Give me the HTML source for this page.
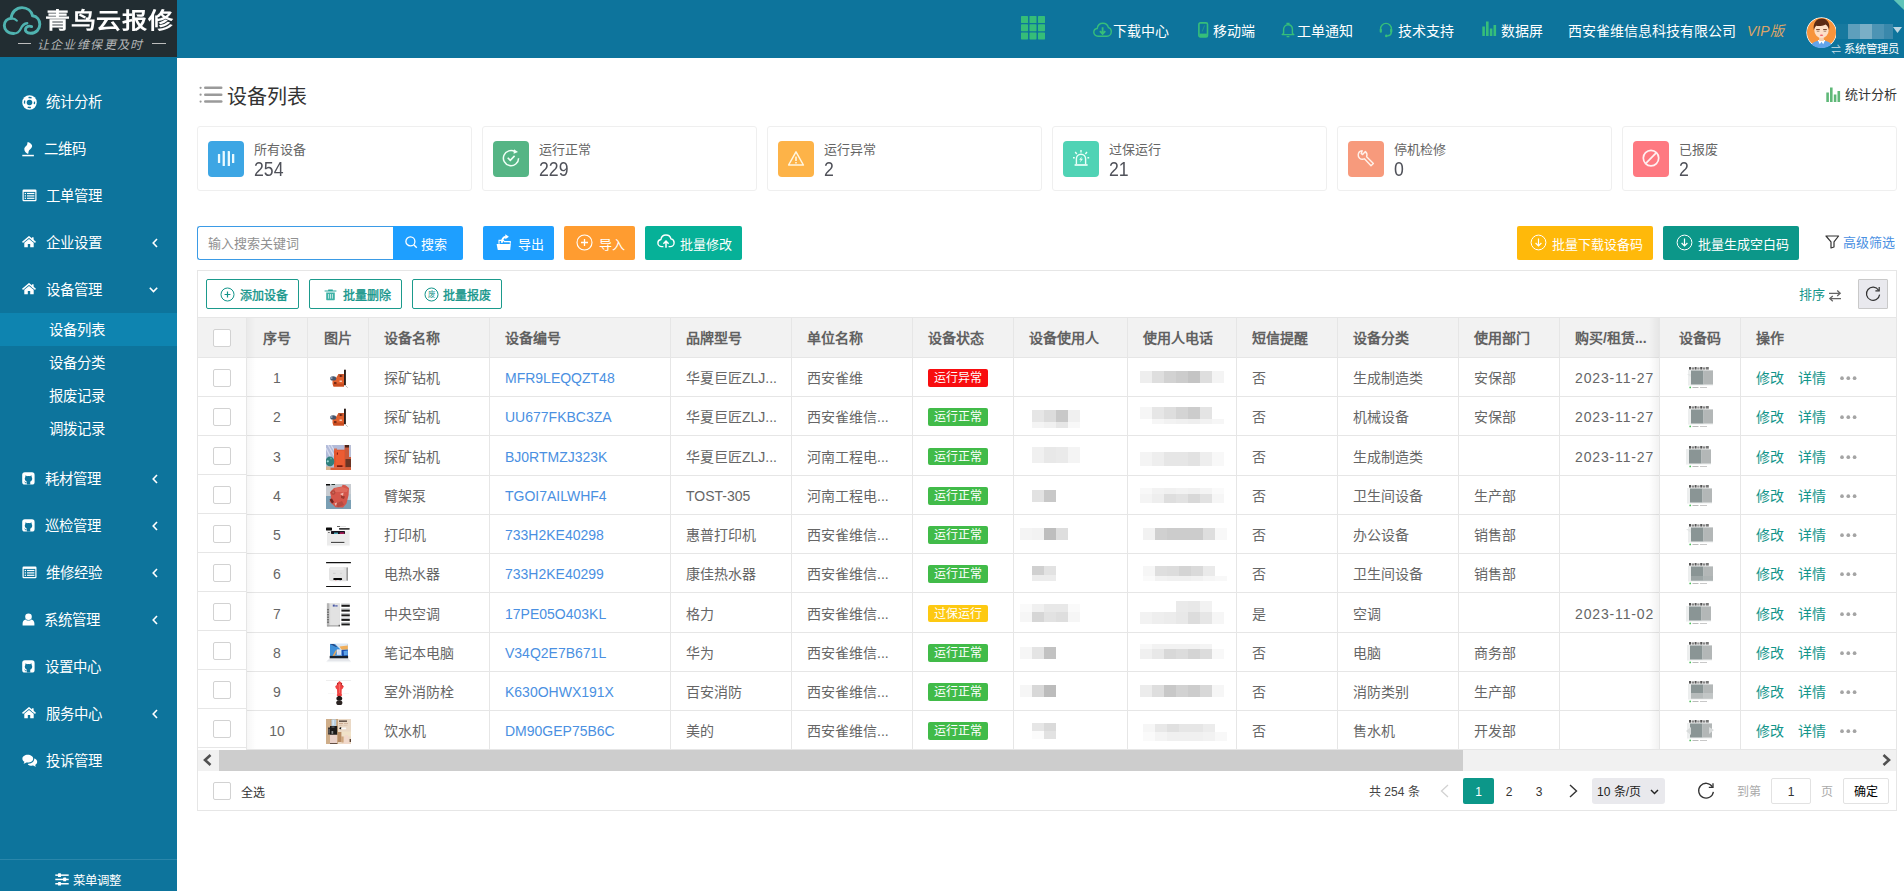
<!DOCTYPE html>
<html lang="zh-CN"><head><meta charset="utf-8"><title>设备列表</title>
<style>
*{box-sizing:border-box}
html,body{margin:0;padding:0}
body{width:1904px;height:891px;overflow:hidden;position:relative;background:#fff;font-family:"Liberation Sans",sans-serif;font-size:14px;color:#666}
.abs{position:absolute}
#hdr{position:absolute;left:0;top:0;width:1904px;height:57.5px;background:#0d749c}
#logo{position:absolute;left:0;top:0;width:177px;height:57px;background:#222d32}
#side{position:absolute;left:0;top:57px;width:177px;height:834px;background:#0d749c}
.mi{position:absolute;left:0;width:177px;height:20px;line-height:20px;color:#fff;font-size:14.400px;white-space:nowrap}
.mi svg{position:absolute}
.mi span{position:absolute;top:0}
.sub{position:absolute;left:48.500px;color:#fff;font-size:14.400px;height:20px;line-height:20px;white-space:nowrap}
.nav{position:absolute;top:21px;height:20px;line-height:20px;color:#fff;font-size:14px;white-space:nowrap}
.card{position:absolute;top:126px;width:275px;height:65px;border:1px solid #efefef;border-radius:3px;background:#fff}
.card .ic{position:absolute;left:10px;top:14px;width:36px;height:36px;border-radius:4px}
.card .lb{position:absolute;left:56px;top:14.500px;font-size:13px;line-height:16px;color:#666;white-space:nowrap}
.card .nm{position:absolute;left:56px;top:31.300px;font-size:20px;line-height:22px;color:#50525a;white-space:nowrap;transform:scaleX(.885);transform-origin:0 50%}
.btn{position:absolute;top:226px;height:34px;line-height:34px;color:#fff;font-size:13px;border-radius:2px;white-space:nowrap}
.btn span{position:absolute;top:1.7px}
.btn svg{position:absolute}
.ob{position:absolute;top:279px;height:30px;border:1px solid #1b9a8c;border-radius:2px;color:#12958a;font-size:12px;-webkit-text-stroke:.35px #12958a;line-height:28px;white-space:nowrap;background:#fff}
.ob span{position:absolute;top:2px}
.ob svg{position:absolute}
.vl{position:absolute;width:1px;background:#e6e6e6}
.hl{position:absolute;height:1px;background:#e6e6e6}
.th{position:absolute;top:328px;height:20px;line-height:20px;font-weight:bold;color:#616161;font-size:14px;white-space:nowrap}
.td{position:absolute;height:20px;line-height:20px;color:#666;font-size:14px;white-space:nowrap}
.lk{color:#4a90e2}
.op{color:#12958a}
.cb{position:absolute;width:18px;height:18px;border:1px solid #d2d2d2;border-radius:2px;background:#fff}
.bdg{position:absolute;width:60px;height:17.500px;line-height:18px;border-radius:2px;color:#fff;font-size:12px;text-align:center}
.blur{position:absolute;filter:blur(1.5px)}
.pg{position:absolute;top:778px;height:26px;line-height:28px;font-size:12px;color:#333;white-space:nowrap}
</style></head><body>

<div id="hdr"></div>
<div id="logo"><svg class="abs" style="left:2px;top:4px" width="40" height="33" viewBox="0 0 40 33"><path d="M11.5 29.5 C5.5 29.5 2.3 25.6 2.3 21.6 C2.3 17.6 5.2 14.6 9.2 14.2 C9.6 8.2 14.2 3.6 20 3.6 C25.2 3.6 29.4 7 30.6 11.8 C35 12.4 37.8 15.8 37.8 20.2 C37.8 25.2 34.2 29.3 28.6 29.3 C24.6 29.3 22.8 27 23.6 24.6 C24.4 22.4 27.4 21.6 29.6 22.6" fill="none" stroke="#4fb3b0" stroke-width="2.900" stroke-linecap="round"/><path d="M11.5 29.5 C15.5 29.5 17.6 27.4 18.8 24.6 C20 21.8 22 19.6 25.2 19.2" fill="none" stroke="#4fb3b0" stroke-width="2.4" stroke-linecap="round"/><path d="M9.2 14.4 C11.4 14.2 13.4 15 14.8 16.6" fill="none" stroke="#4fb3b0" stroke-width="2.2" stroke-linecap="round"/></svg><div class="abs" style="left:45px;top:5px;height:32px;line-height:32px;font-size:21.500px;font-weight:bold;color:#fff;white-space:nowrap;transform:scaleX(1.165);transform-origin:0 50%">青鸟云报修</div><div class="abs" style="left:18px;top:43px;width:13px;height:1px;background:#bdbdbd"></div><div class="abs" style="left:152px;top:43px;width:14px;height:1px;background:#bdbdbd"></div><div class="abs" style="left:36.800px;top:36.700px;height:16px;line-height:16px;font-size:12px;color:#b4b6b7;white-space:nowrap;letter-spacing:1.35px;font-style:italic;font-family:'Liberation Serif',serif">让企业维保更及时</div></div>
<svg class="abs" style="left:1890px;top:0" width="14" height="12" viewBox="0 0 14 12"><polygon points="3.8,0 14,0 14,10.1" fill="#5fc4b8"/></svg>
<svg class="abs" style="left:1021px;top:15.5px" width="25" height="24" viewBox="0 0 25 24"><rect x="0.0" y="0.0" width="7" height="7" rx="0.6" fill="#35bd78"/><rect x="8.5" y="0.0" width="7" height="7" rx="0.6" fill="#35bd78"/><rect x="17.0" y="0.0" width="7" height="7" rx="0.6" fill="#35bd78"/><rect x="0.0" y="8.2" width="7" height="7" rx="0.6" fill="#35bd78"/><rect x="8.5" y="8.2" width="7" height="7" rx="0.6" fill="#35bd78"/><rect x="17.0" y="8.2" width="7" height="7" rx="0.6" fill="#35bd78"/><rect x="0.0" y="16.4" width="7" height="7" rx="0.6" fill="#35bd78"/><rect x="8.5" y="16.4" width="7" height="7" rx="0.6" fill="#35bd78"/><rect x="17.0" y="16.4" width="7" height="7" rx="0.6" fill="#35bd78"/></svg>
<div class="abs" style="left:1093px;top:22px"><svg width="19" height="16" viewBox="0 0 19 16"><path d="M5 14.2 C2.6 14.2 0.8 12.5 0.8 10.3 C0.8 8.3 2.3 6.7 4.2 6.5 C4.6 3.5 6.9 1.2 9.9 1.2 C12.6 1.2 14.8 3 15.4 5.6 C17.1 6 18.3 7.6 18.3 9.6 C18.3 12.1 16.4 14.2 14 14.2 Z" fill="none" stroke="#36be7a" stroke-width="1.4"/><path d="M9.6 5.2 V11.6 M6.9 9.1 L9.6 11.9 L12.3 9.1" fill="none" stroke="#36be7a" stroke-width="1.8"/></svg></div>
<div class="nav" style="left:1113.3px">下载中心</div>
<div class="abs" style="left:1198px;top:22px"><svg width="11" height="16" viewBox="0 0 11 16"><rect x="0.9" y="0.9" width="8.6" height="14" rx="1.4" fill="none" stroke="#36be7a" stroke-width="1.6"/><rect x="1.5" y="11.6" width="7.4" height="2.8" fill="#36be7a"/><path d="M6.5 3.5 L4.2 9.5" stroke="#36be7a" stroke-width="0.7" opacity=".7"/></svg></div>
<div class="nav" style="left:1213.3px">移动端</div>
<div class="abs" style="left:1281px;top:22px"><svg width="14" height="16" viewBox="0 0 14 16"><path d="M2.6 11.6 V7.6 C2.6 4.8 4.4 2.8 7 2.8 C9.6 2.8 11.4 4.8 11.4 7.6 V11.6 L12.8 12.6 H1.2 Z" fill="none" stroke="#36be7a" stroke-width="1.4" stroke-linejoin="round"/><path d="M5.4 1.4 H8.6 M5.6 14.6 H8.4" stroke="#36be7a" stroke-width="1.4"/></svg></div>
<div class="nav" style="left:1297px">工单通知</div>
<div class="abs" style="left:1379px;top:22px"><svg width="14" height="16" viewBox="0 0 14 16"><path d="M1.6 8.6 V7 C1.6 3.8 4 1.4 7 1.4 C10 1.4 12.4 3.8 12.4 7 V9.4 C12.4 12 10.8 13.6 8.2 13.8" fill="none" stroke="#36be7a" stroke-width="1.4"/><rect x="0.7" y="6.8" width="2.2" height="4" rx="1" fill="#36be7a"/><rect x="11.1" y="6.8" width="2.2" height="4" rx="1" fill="#36be7a"/><circle cx="7.3" cy="13.9" r="1.3" fill="#36be7a"/></svg></div>
<div class="nav" style="left:1397.5px">技术支持</div>
<div class="abs" style="left:1481.5px;top:20.5px"><svg width="15" height="15" viewBox="0 0 15 15"><g fill="#36be7a"><rect x="0.3" y="5.5" width="2.6" height="9.5"/><rect x="4" y="0.5" width="2.6" height="14.5"/><rect x="7.8" y="7.5" width="2.6" height="7.5"/><rect x="11.5" y="4" width="2.6" height="11"/></g></svg></div>
<div class="nav" style="left:1501.3px">数据屏</div>
<div class="nav" style="left:1568px">西安雀维信息科技有限公司</div>
<div class="nav" style="left:1747px;color:#dca468;font-style:italic;font-size:14px">VIP版</div>
<div class="abs" style="left:1806px;top:17px"><svg width="31" height="31" viewBox="0 0 31 31" style="display:block;border-radius:50%;overflow:hidden"><circle cx="15.5" cy="15.5" r="15.200" fill="#fff"/><circle cx="15.5" cy="15.5" r="14.500" fill="#f7943c"/><g><path d="M4.500 31 C5 25.500 9.500 23.600 15.500 23.600 C21.500 23.600 26 25.500 26.500 31 Z" fill="#62a4ea"/><path d="M11.800 23.200 L13.800 27.200 L15.500 24.800 L17.200 27.200 L19.200 23.200 L15.500 22 Z" fill="#fff"/><rect x="13.200" y="19" width="4.600" height="5" fill="#f6cfae"/><ellipse cx="15.500" cy="13" rx="7.200" ry="8.200" fill="#fde0c8"/><path d="M7.900 13.200 C6.600 6 10.400 1.400 15.800 1.400 C21.200 1.400 24.600 6.200 23 13.200 C22.600 10.600 21.400 8.800 19.600 7.600 C16.400 9.200 12.200 9.400 10.200 8.800 C9 10 8.300 11.400 7.900 13.200 Z" fill="#5a2a14"/><path d="M10.200 12.600 h3.600 M17.200 12.600 h3.600" stroke="#6b3a22" stroke-width="1"/><path d="M10.800 14.300 h2.600 M17.600 14.300 h2.600" stroke="#8a6a55" stroke-width=".7"/><ellipse cx="15.500" cy="18.200" rx="1.700" ry=".8" fill="#f0606a"/></g></svg></div>
<div class="abs" style="left:1836px;top:24px;width:12px;height:14.500px;background:#17799f"></div>
<div class="abs" style="left:1848px;top:24px;width:12px;height:14.500px;background:#5e9fbc"></div>
<div class="abs" style="left:1860px;top:24px;width:12px;height:14.500px;background:#7aafc6"></div>
<div class="abs" style="left:1872px;top:24px;width:12px;height:14.500px;background:#4d94b4"></div>
<div class="abs" style="left:1884px;top:24px;width:9px;height:14.500px;background:#3a88ab"></div>
<svg class="abs" style="left:1893px;top:27px" width="9" height="6" viewBox="0 0 9 6"><polygon points="0,0 9,0 4.5,6" fill="#bcd6e2"/></svg>
<div class="abs" style="left:1830.500px;top:42px;height:14px;line-height:14px;font-size:11.300px;color:#fff;white-space:nowrap"><span style="color:#c8dde6;font-size:10px">⇌</span> 系统管理员</div>
<div id="side"></div>
<div class="mi" style="top:92.0px"><svg style="left:21.5px;top:2.5px" width="15" height="15" viewBox="0 0 15 15"><circle cx="7.5" cy="7.5" r="7.250" fill="#fff"/><circle cx="7.5" cy="7.5" r="2.800" fill="#0d749c"/><circle cx="7.5" cy="7.5" r="5" fill="none" stroke="#0d749c" stroke-width="1.300" stroke-dasharray="3.300 4.554" stroke-dashoffset="1.650"/></svg><span style="left:46.3px">统计分析</span></div>
<div class="mi" style="top:139.3px"><svg style="left:21.5px;top:1.7px" width="12" height="16" viewBox="0 0 12 16"><path d="M5.800 1 C8.500 2 10.600 3.600 10.100 5.600 C9.600 8 6.800 8.800 6.600 10.600 C6.500 11.600 6.400 12.400 6.100 13 C4.400 12.400 2.200 10.400 2.300 8 C2.400 5.400 5.400 4.800 5.300 2.700 C5.300 2 5.500 1.400 5.800 1 Z" fill="#fff"/><rect x="0.300" y="13.800" width="11.600" height="1.500" fill="#fff"/></svg><span style="left:43.7px">二维码</span></div>
<div class="mi" style="top:186.3px"><svg style="left:21.5px;top:3px" width="15" height="13" viewBox="0 0 15 13"><rect x="0.5" y="0.6" width="14" height="11.6" rx="1.2" fill="#fff"/><rect x="1.7" y="2.9" width="11.6" height="8.1" fill="#0d749c"/><g fill="#fff"><rect x="2.7" y="3.9" width="1.3" height="1.2"/><rect x="5" y="3.9" width="7.4" height="1.2"/><rect x="2.7" y="6.3" width="1.3" height="1.2"/><rect x="5" y="6.3" width="7.4" height="1.2"/><rect x="2.7" y="8.7" width="1.3" height="1.2"/><rect x="5" y="8.7" width="7.4" height="1.2"/></g></svg><span style="left:46.3px">工单管理</span></div>
<div class="mi" style="top:233.0px"><svg style="left:22px;top:3px" width="14" height="12" viewBox="0 0 14 12"><path d="M7 2.9 L2.3 6.8 V11.2 H5.8 V8 H8.2 V11.2 H11.7 V6.8 Z" fill="#fff"/><path d="M0.5 6.3 L7 0.9 L13.5 6.3" fill="none" stroke="#fff" stroke-width="1.5" stroke-linejoin="miter"/><rect x="9.9" y="1.3" width="1.7" height="3.4" fill="#fff"/></svg><span style="left:45.8px">企业设置</span><svg style="left:152px;top:5px" width="6" height="10" viewBox="0 0 6 10"><path d="M5 1L1.2 5L5 9" fill="none" stroke="#fff" stroke-width="1.6"/></svg></div>
<div class="mi" style="top:279.7px"><svg style="left:22px;top:3px" width="14" height="12" viewBox="0 0 14 12"><path d="M7 2.9 L2.3 6.8 V11.2 H5.8 V8 H8.2 V11.2 H11.7 V6.8 Z" fill="#fff"/><path d="M0.5 6.3 L7 0.9 L13.5 6.3" fill="none" stroke="#fff" stroke-width="1.5" stroke-linejoin="miter"/><rect x="9.9" y="1.3" width="1.7" height="3.4" fill="#fff"/></svg><span style="left:45.8px">设备管理</span><svg style="left:149px;top:7px" width="9" height="6" viewBox="0 0 9 6"><path d="M0.8 0.8L4.5 4.6L8.2 0.8" fill="none" stroke="#fff" stroke-width="1.6"/></svg></div>
<div class="mi" style="top:469.0px"><svg style="left:22px;top:3px" width="13" height="13" viewBox="0 0 13 13"><rect x="0.2" y="0.3" width="12.4" height="12.2" rx="2.6" fill="#fff"/><path d="M3.6 3.2 L5 4.2 C6 3.9 7 3.9 8 4.2 L9.4 3.2 C9.7 4 9.7 4.6 9.6 5 C10.2 5.7 10.3 6.6 10.1 7.6 C9.8 8.9 8.9 9.6 8 9.7 C8.3 10.1 8.3 10.5 8.3 12.5 H4.9 V11.2 C4 11.5 3.3 11.2 2.9 10.4 C2.7 10 2.4 9.8 2.2 9.7 C2.6 9.5 3 9.7 3.3 10.1 C3.7 10.7 4.3 10.7 4.9 10.5 C4.9 10.2 5 9.9 5.1 9.7 C4.1 9.6 3.2 8.9 2.9 7.6 C2.7 6.6 2.8 5.7 3.4 5 C3.3 4.6 3.3 4 3.6 3.2 Z" fill="#0d749c"/></svg><span style="left:44.5px">耗材管理</span><svg style="left:152px;top:5px" width="6" height="10" viewBox="0 0 6 10"><path d="M5 1L1.2 5L5 9" fill="none" stroke="#fff" stroke-width="1.6"/></svg></div>
<div class="mi" style="top:516.0px"><svg style="left:22px;top:3px" width="13" height="13" viewBox="0 0 13 13"><rect x="0.2" y="0.3" width="12.4" height="12.2" rx="2.6" fill="#fff"/><path d="M3.6 3.2 L5 4.2 C6 3.9 7 3.9 8 4.2 L9.4 3.2 C9.7 4 9.7 4.6 9.6 5 C10.2 5.7 10.3 6.6 10.1 7.6 C9.8 8.9 8.9 9.6 8 9.7 C8.3 10.1 8.3 10.5 8.3 12.5 H4.9 V11.2 C4 11.5 3.3 11.2 2.9 10.4 C2.7 10 2.4 9.8 2.2 9.7 C2.6 9.5 3 9.7 3.3 10.1 C3.7 10.7 4.3 10.7 4.9 10.5 C4.9 10.2 5 9.9 5.1 9.7 C4.1 9.6 3.2 8.9 2.9 7.6 C2.7 6.6 2.8 5.7 3.4 5 C3.3 4.6 3.3 4 3.6 3.2 Z" fill="#0d749c"/></svg><span style="left:44.5px">巡检管理</span><svg style="left:152px;top:5px" width="6" height="10" viewBox="0 0 6 10"><path d="M5 1L1.2 5L5 9" fill="none" stroke="#fff" stroke-width="1.6"/></svg></div>
<div class="mi" style="top:563.0px"><svg style="left:21.5px;top:3px" width="15" height="13" viewBox="0 0 15 13"><rect x="0.5" y="0.6" width="14" height="11.6" rx="1.2" fill="#fff"/><rect x="1.7" y="2.9" width="11.6" height="8.1" fill="#0d749c"/><g fill="#fff"><rect x="2.7" y="3.9" width="1.3" height="1.2"/><rect x="5" y="3.9" width="7.4" height="1.2"/><rect x="2.7" y="6.3" width="1.3" height="1.2"/><rect x="5" y="6.3" width="7.4" height="1.2"/><rect x="2.7" y="8.7" width="1.3" height="1.2"/><rect x="5" y="8.7" width="7.4" height="1.2"/></g></svg><span style="left:46.3px">维修经验</span><svg style="left:152px;top:5px" width="6" height="10" viewBox="0 0 6 10"><path d="M5 1L1.2 5L5 9" fill="none" stroke="#fff" stroke-width="1.6"/></svg></div>
<div class="mi" style="top:610.0px"><svg style="left:22px;top:3px" width="13" height="13" viewBox="0 0 13 13"><circle cx="6.5" cy="3.7" r="3.3" fill="#fff"/><path d="M0.6 12.6 V10.4 C0.6 8.2 2 6.6 3.6 6.4 C4.4 7.2 5.4 7.6 6.5 7.6 C7.6 7.6 8.6 7.2 9.4 6.4 C11 6.6 12.4 8.2 12.4 10.4 V12.6 Z" fill="#fff"/></svg><span style="left:43.5px">系统管理</span><svg style="left:152px;top:5px" width="6" height="10" viewBox="0 0 6 10"><path d="M5 1L1.2 5L5 9" fill="none" stroke="#fff" stroke-width="1.6"/></svg></div>
<div class="mi" style="top:657.0px"><svg style="left:22px;top:3px" width="13" height="13" viewBox="0 0 13 13"><rect x="0.2" y="0.3" width="12.4" height="12.2" rx="2.6" fill="#fff"/><path d="M3.6 3.2 L5 4.2 C6 3.9 7 3.9 8 4.2 L9.4 3.2 C9.7 4 9.7 4.6 9.6 5 C10.2 5.7 10.3 6.6 10.1 7.6 C9.8 8.9 8.9 9.6 8 9.7 C8.3 10.1 8.3 10.5 8.3 12.5 H4.9 V11.2 C4 11.5 3.3 11.2 2.9 10.4 C2.7 10 2.4 9.8 2.2 9.7 C2.6 9.5 3 9.7 3.3 10.1 C3.7 10.7 4.3 10.7 4.9 10.5 C4.9 10.2 5 9.9 5.1 9.7 C4.1 9.6 3.2 8.9 2.9 7.6 C2.7 6.6 2.8 5.7 3.4 5 C3.3 4.6 3.3 4 3.6 3.2 Z" fill="#0d749c"/></svg><span style="left:44.5px">设置中心</span></div>
<div class="mi" style="top:704.0px"><svg style="left:22px;top:3px" width="14" height="12" viewBox="0 0 14 12"><path d="M7 2.9 L2.3 6.8 V11.2 H5.8 V8 H8.2 V11.2 H11.7 V6.8 Z" fill="#fff"/><path d="M0.5 6.3 L7 0.9 L13.5 6.3" fill="none" stroke="#fff" stroke-width="1.5" stroke-linejoin="miter"/><rect x="9.9" y="1.3" width="1.7" height="3.4" fill="#fff"/></svg><span style="left:45.8px">服务中心</span><svg style="left:152px;top:5px" width="6" height="10" viewBox="0 0 6 10"><path d="M5 1L1.2 5L5 9" fill="none" stroke="#fff" stroke-width="1.6"/></svg></div>
<div class="mi" style="top:751.0px"><svg style="left:21.5px;top:3px" width="16" height="13" viewBox="0 0 16 13"><path d="M5.8 0.8 C8.9 0.8 11.2 2.5 11.2 4.7 C11.2 6.9 8.9 8.6 5.8 8.6 C5.3 8.6 4.9 8.6 4.4 8.5 C3.6 9.2 2.6 9.6 1.4 9.7 C2 9.1 2.3 8.5 2.4 7.8 C1.2 7.1 0.4 6 0.4 4.7 C0.4 2.5 2.7 0.8 5.8 0.8 Z" fill="#fff"/><path d="M12.3 4.3 C14 5 15.2 6.3 15.2 7.8 C15.2 9.1 14.4 10.2 13.2 10.9 C13.3 11.6 13.6 12.2 14.2 12.8 C13 12.7 12 12.3 11.2 11.6 C10.7 11.7 10.3 11.7 9.8 11.7 C8.2 11.7 6.8 11.2 5.8 10.4 C6.2 10.1 6 9.7 6.4 9.7 C9.8 9.5 12.4 7.4 12.3 4.3 Z" fill="#fff"/></svg><span style="left:46.3px">投诉管理</span></div>
<div class="abs" style="left:0;top:313px;width:177px;height:33px;background:#0e84b0"></div>
<div class="sub" style="top:320px">设备列表</div>
<div class="sub" style="top:353px">设备分类</div>
<div class="sub" style="top:386px">报废记录</div>
<div class="sub" style="top:419px">调拨记录</div>
<div class="abs" style="left:0;top:859px;width:177px;height:1px;background:#2a86aa"></div>
<div class="abs" style="left:55px;top:873px"><svg width="14" height="13" viewBox="0 0 14 13"><g fill="#fff"><rect x="0.3" y="1.4" width="13.4" height="1.5"/><rect x="0.3" y="5.7" width="13.4" height="1.5"/><rect x="0.3" y="10" width="13.4" height="1.5"/><rect x="3" y="0.3" width="3" height="3.7" rx="0.6"/><rect x="8.2" y="4.6" width="3" height="3.7" rx="0.6"/><rect x="3" y="8.9" width="3" height="3.7" rx="0.6"/></g></svg></div>
<div class="abs" style="left:72.500px;top:873.300px;height:16px;line-height:16px;font-size:12.400px;color:#fff;white-space:nowrap">菜单调整</div>
<svg class="abs" style="left:199px;top:85.500px" width="24" height="18" viewBox="0 0 24 18"><g fill="#9a9a9a"><circle cx="1.600" cy="1.800" r="1.100"/><circle cx="1.600" cy="8.700" r="1.100"/><circle cx="1.600" cy="15.600" r="1.100"/><rect x="5" y="0.500" width="18.500" height="2.500" rx="1.250"/><rect x="5" y="7.400" width="18.500" height="2.500" rx="1.250"/><rect x="5" y="14.300" width="18.500" height="2.500" rx="1.250"/></g></svg>
<div class="abs" style="left:227px;top:82.500px;height:28px;line-height:28px;font-size:20px;color:#333;white-space:nowrap">设备列表</div>
<div class="abs" style="left:1826px;top:86.5px"><svg width="15" height="15" viewBox="0 0 15 15"><g fill="#5fb878"><rect x="0.3" y="5.5" width="2.6" height="9.5"/><rect x="4" y="0.5" width="2.6" height="14.5"/><rect x="7.8" y="7.5" width="2.6" height="7.5"/><rect x="11.5" y="4" width="2.6" height="11"/></g></svg></div>
<div class="abs" style="left:1844.5px;top:86px;height:18px;line-height:18px;font-size:13px;color:#333;white-space:nowrap">统计分析</div>
<div class="card" style="left:197px"><div class="ic" style="background:#3da6e4"><svg width="36" height="36" viewBox="0 0 36 36" style="position:absolute;left:0;top:0"><g fill="#eafaff"><rect x="9.9" y="12.9" width="2.3" height="9.2" rx=".4"/><rect x="14.6" y="10" width="2.3" height="15.1" rx=".4"/><rect x="19.7" y="10" width="2.3" height="15.1" rx=".4"/><rect x="24" y="12.9" width="2.3" height="9.2" rx=".4"/></g></svg></div><div class="lb">所有设备</div><div class="nm">254</div></div>
<div class="card" style="left:482px"><div class="ic" style="background:#55b585"><svg width="36" height="36" viewBox="0 0 36 36" style="position:absolute;left:0;top:0"><path d="M22.2 10.8 A7.6 7.6 0 1 0 25.6 17.2" fill="none" stroke="#f0fff6" stroke-width="1.5"/><path d="M21 8.2 L25 10.9 L20.6 12.8 Z" fill="#f0fff6"/><path d="M14.7 16.7 L17.3 19.3 L21.6 14.9" fill="none" stroke="#f0fff6" stroke-width="1.6"/></svg></div><div class="lb">运行正常</div><div class="nm">229</div></div>
<div class="card" style="left:767px"><div class="ic" style="background:#fdb348"><svg width="36" height="36" viewBox="0 0 36 36" style="position:absolute;left:0;top:0"><path d="M18 10.8 L25.4 24 H10.6 Z" fill="none" stroke="#fff6e0" stroke-width="1.5" stroke-linejoin="round"/><rect x="17.2" y="15.6" width="1.6" height="4.4" fill="#fff6e0"/><rect x="17.2" y="21" width="1.6" height="1.5" fill="#fff6e0"/></svg></div><div class="lb">运行异常</div><div class="nm">2</div></div>
<div class="card" style="left:1052px"><div class="ic" style="background:#50d3b5"><svg width="36" height="36" viewBox="0 0 36 36" style="position:absolute;left:0;top:0"><g fill="none" stroke="#eafff8" stroke-width="1.4"><path d="M13.4 23.2 V17.8 C13.4 15.2 15.4 13.2 18 13.2 C20.6 13.2 22.6 15.2 22.6 17.8 V23.2"/><path d="M11.6 24 H24.6" stroke-width="1.7"/><path d="M18 9 V11.6 M12.2 11 L13.8 13 M24 11 L22.4 13 M10 16.8 H11.8 M24.4 16.8 H26.2"/></g><path d="M18.8 15.4 L16.2 18.8 H17.8 L17 21.6 L20 17.8 H18.2 Z" fill="#eafff8"/></svg></div><div class="lb">过保运行</div><div class="nm">21</div></div>
<div class="card" style="left:1337px"><div class="ic" style="background:#f79a7c"><svg width="36" height="36" viewBox="0 0 36 36" style="position:absolute;left:0;top:0"><path d="M14.2 9.8 C12.2 10 10.4 11.6 10.2 13.8 C10 16.6 12.4 18.6 15 18.2 L16.4 17.8 L23 24.8 L25.4 22.6 L18.6 15.8 C19.4 13.8 18.8 11.8 17.4 10.6 L14.6 13.6 L13.2 12.4 Z" fill="none" stroke="#fff1ea" stroke-width="1.4" stroke-linejoin="round"/></svg></div><div class="lb">停机检修</div><div class="nm">0</div></div>
<div class="card" style="left:1622px"><div class="ic" style="background:#fe7981"><svg width="36" height="36" viewBox="0 0 36 36" style="position:absolute;left:0;top:0"><circle cx="18" cy="17.1" r="7.7" fill="none" stroke="#fff0f1" stroke-width="1.7"/><path d="M23.4 11.6 L12.6 22.6" stroke="#fff0f1" stroke-width="1.7"/></svg></div><div class="lb">已报废</div><div class="nm">2</div></div>
<div class="abs" style="left:197px;top:226px;width:197px;height:34px;border:1px solid #3b9be6;border-right:0;border-radius:3px 0 0 3px;background:#fff"></div>
<div class="abs" style="left:207.5px;top:235px;height:18px;line-height:18px;font-size:13px;color:#909090;white-space:nowrap">输入搜索关键词</div>
<div class="btn" style="left:393px;width:70px;background:#1e9fff;border-radius:0 2px 2px 0"><svg style="left:11.5px;top:10px" width="13" height="13" viewBox="0 0 13 13"><circle cx="5.4" cy="5.4" r="4.5" fill="none" stroke="#fff" stroke-width="1.3"/><path d="M8.7 8.7 L11.8 11.8" stroke="#fff" stroke-width="1.4"/></svg><span style="left:27.7px">搜索</span></div>
<div class="btn" style="left:483px;width:71px;background:#1e9fff"><svg style="left:12.600px;top:8px" width="16" height="17" viewBox="0 0 16 17"><path d="M0.600 10 H14.800 L14.200 15.900 H1.800 Z" fill="#fff"/><path d="M3 9.800 V6.400 H7.400 L8.400 7.600 H14.300 V9.800" fill="none" stroke="#fff" stroke-width="1.100"/><path d="M5.900 8.800 C5.900 5.400 7 3.200 9.800 2.700" stroke="#fff" stroke-width="1.900" fill="none"/><path d="M9.300 0.200 L12.900 2.700 L9.300 5.200 Z" fill="#fff"/></svg><span style="left:35px">导出</span></div>
<div class="btn" style="left:564px;width:71px;background:#ff9c30"><svg style="left:11.700px;top:7.500px" width="17" height="17" viewBox="0 0 17 17"><circle cx="8.5" cy="8.5" r="7.5" fill="none" stroke="#fff" stroke-width="1.1"/><path d="M8.5 5 V12 M5 8.5 H12" stroke="#fff" stroke-width="1.3"/></svg><span style="left:35px">导入</span></div>
<div class="btn" style="left:645px;width:97px;background:#06b198"><svg style="left:12px;top:8px" width="18" height="15" viewBox="0 0 18 15"><path d="M6.4 12.6 H4.8 C2.6 12.6 0.9 11 0.9 9 C0.9 7.2 2.2 5.8 3.9 5.5 C4.3 2.9 6.4 1 9 1 C11.4 1 13.4 2.600 14 4.900 C15.8 5.200 17.100 6.800 17.100 8.700 C17.100 10.900 15.400 12.600 13.200 12.600 H11.600" fill="none" stroke="#fff" stroke-width="1.4"/><path d="M9 13.800 V7.400 M6.400 9.800 L9 7.100 L11.600 9.800" fill="none" stroke="#fff" stroke-width="1.5"/></svg><span style="left:34.5px">批量修改</span></div>
<div class="btn" style="left:1517px;width:136px;background:#ffb90a"><svg style="left:12.5px;top:8px" width="17" height="17" viewBox="0 0 17 17"><circle cx="8.5" cy="8.500" r="7.400" fill="none" stroke="#fff" stroke-width="1"/><path d="M8.500 4.600 V11.800 M5.600 9 L8.500 11.900 L11.400 9" fill="none" stroke="#fff" stroke-width="1.200"/></svg><span style="left:35px">批量下载设备码</span></div>
<div class="btn" style="left:1663px;width:136px;background:#0c9789"><svg style="left:12.5px;top:8px" width="17" height="17" viewBox="0 0 17 17"><circle cx="8.5" cy="8.500" r="7.400" fill="none" stroke="#fff" stroke-width="1"/><path d="M8.500 4.600 V11.800 M5.600 9 L8.500 11.900 L11.400 9" fill="none" stroke="#fff" stroke-width="1.200"/></svg><span style="left:35px">批量生成空白码</span></div>
<div class="abs" style="left:1825px;top:235px"><svg width="15" height="14" viewBox="0 0 15 14"><path d="M1 1 H13.600 L9 6.800 V12 L6 13 V6.800 Z" fill="none" stroke="#333" stroke-width="1.200" stroke-linejoin="round"/></svg></div>
<div class="abs" style="left:1843px;top:234px;height:18px;line-height:18px;font-size:13px;color:#4a90e2;white-space:nowrap">高级筛选</div>
<div class="abs" style="left:197px;top:270px;width:1700px;height:541px;border:1px solid #e6e6e6"></div>
<div class="abs" style="left:198px;top:318px;width:1698px;height:39px;background:#f2f2f2"></div>
<div class="ob" style="left:206px;width:93px"><svg style="left:13px;top:7px" width="15" height="15" viewBox="0 0 15 15"><circle cx="7.500" cy="7.500" r="6.500" fill="none" stroke="#12958a" stroke-width="1"/><path d="M7.500 4.600 V10.400 M4.600 7.500 H10.400" stroke="#12958a" stroke-width="1.200"/></svg><span style="left:32.5px">添加设备</span></div>
<div class="ob" style="left:309px;width:93px"><svg style="left:14px;top:8.500px" width="13" height="12" viewBox="0 0 13 12"><path d="M0.600 2 H12.400 M4.200 1 H8.800" stroke="#2aa79b" stroke-width="1.200"/><path d="M2.200 3.400 H10.800 V10.200 C10.800 10.900 10.400 11.300 9.700 11.300 H3.300 C2.600 11.300 2.200 10.900 2.200 10.200 Z" fill="#3fb2a6"/><path d="M4.600 5 V9.600 M6.500 5 V9.600 M8.400 5 V9.600" stroke="#fff" stroke-width=".7"/></svg><span style="left:32.5px">批量删除</span></div>
<div class="ob" style="left:412px;width:90px"><svg style="left:11px;top:7px" width="15" height="15" viewBox="0 0 15 15"><circle cx="7.500" cy="7.500" r="6.500" fill="none" stroke="#12958a" stroke-width="1"/><text x="7.500" y="10.300" font-size="7.500" text-anchor="middle" fill="#12958a" font-family="Liberation Sans, sans-serif">废</text></svg><span style="left:29.5px">批量报废</span></div>
<div class="abs" style="left:1798.5px;top:286px;height:18px;line-height:18px;font-size:13px;color:#12958a;white-space:nowrap">排序</div>
<div class="abs" style="left:1828px;top:288.5px"><svg width="14" height="12" viewBox="0 0 14 12"><path d="M1 3.300 H12 M9.200 0.600 L12.200 3.300 L9.200 6 M13 8.600 H2 M4.800 5.900 L1.800 8.600 L4.800 11.300" fill="none" stroke="#666" stroke-width="1.300"/></svg></div>
<div class="abs" style="left:1858px;top:279px;width:30px;height:30px;border:1px solid #c9c9c9;background:#e9e9ee;border-radius:1px"><svg style="position:absolute;left:6px;top:6px" width="16" height="16" viewBox="0 0 16 16"><path d="M13.600 4.200 A6.600 6.600 0 1 0 14.600 8.600" fill="none" stroke="#333" stroke-width="1.200"/><path d="M14.200 1 V4.800 H10.400" fill="none" stroke="#333" stroke-width="1.200"/></svg></div>
<div class="hl" style="left:198px;top:317px;width:1698px"></div>
<div class="hl" style="left:247px;top:357px;width:1649px"></div>
<div class="hl" style="left:198px;top:357px;width:49px"></div>
<div class="hl" style="left:247px;top:396px;width:1649px"></div>
<div class="hl" style="left:198px;top:396px;width:49px"></div>
<div class="hl" style="left:247px;top:435px;width:1649px"></div>
<div class="hl" style="left:198px;top:435px;width:49px"></div>
<div class="hl" style="left:247px;top:475px;width:1649px"></div>
<div class="hl" style="left:198px;top:474px;width:49px"></div>
<div class="hl" style="left:247px;top:514px;width:1649px"></div>
<div class="hl" style="left:198px;top:513px;width:49px"></div>
<div class="hl" style="left:247px;top:553px;width:1649px"></div>
<div class="hl" style="left:198px;top:552px;width:49px"></div>
<div class="hl" style="left:247px;top:592px;width:1649px"></div>
<div class="hl" style="left:198px;top:591px;width:49px"></div>
<div class="hl" style="left:247px;top:632px;width:1649px"></div>
<div class="hl" style="left:198px;top:630px;width:49px"></div>
<div class="hl" style="left:247px;top:671px;width:1649px"></div>
<div class="hl" style="left:198px;top:669px;width:49px"></div>
<div class="hl" style="left:247px;top:710px;width:1649px"></div>
<div class="hl" style="left:198px;top:708px;width:49px"></div>
<div class="hl" style="left:247px;top:749px;width:1649px"></div>
<div class="hl" style="left:198px;top:747px;width:49px"></div>
<div class="vl" style="left:246px;top:318px;height:431.5px"></div>
<div class="vl" style="left:307px;top:318px;height:431.5px"></div>
<div class="vl" style="left:368px;top:318px;height:431.5px"></div>
<div class="vl" style="left:489px;top:318px;height:431.5px"></div>
<div class="vl" style="left:670px;top:318px;height:431.5px"></div>
<div class="vl" style="left:791px;top:318px;height:431.5px"></div>
<div class="vl" style="left:912px;top:318px;height:431.5px"></div>
<div class="vl" style="left:1013px;top:318px;height:431.5px"></div>
<div class="vl" style="left:1127px;top:318px;height:431.5px"></div>
<div class="vl" style="left:1236px;top:318px;height:431.5px"></div>
<div class="vl" style="left:1337px;top:318px;height:431.5px"></div>
<div class="vl" style="left:1458px;top:318px;height:431.5px"></div>
<div class="vl" style="left:1559px;top:318px;height:431.5px"></div>
<div class="vl" style="left:1659px;top:318px;height:431.5px"></div>
<div class="vl" style="left:1740px;top:318px;height:431.5px"></div>
<div class="abs" style="left:247px;top:318px;width:9px;height:431px;background:linear-gradient(90deg,rgba(0,0,0,.035),rgba(0,0,0,0))"></div>
<div class="abs" style="left:1649px;top:318px;width:10px;height:431px;background:linear-gradient(90deg,rgba(0,0,0,0),rgba(0,0,0,.05))"></div>
<div class="cb" style="left:213px;top:329px"></div>
<div class="th" style="left:247px;width:60px;text-align:center">序号</div>
<div class="th" style="left:308px;width:60px;text-align:center">图片</div>
<div class="th" style="left:384px">设备名称</div>
<div class="th" style="left:505px">设备编号</div>
<div class="th" style="left:686px">品牌型号</div>
<div class="th" style="left:807px">单位名称</div>
<div class="th" style="left:928px">设备状态</div>
<div class="th" style="left:1029px">设备使用人</div>
<div class="th" style="left:1143px">使用人电话</div>
<div class="th" style="left:1252px">短信提醒</div>
<div class="th" style="left:1353px">设备分类</div>
<div class="th" style="left:1474px">使用部门</div>
<div class="th" style="left:1575px">购买/租赁...</div>
<div class="th" style="left:1660px;width:80px;text-align:center">设备码</div>
<div class="th" style="left:1756px">操作</div>
<div class="cb" style="left:213px;top:369.00px"></div>
<div class="td" style="left:247px;width:60px;text-align:center;top:368.00px">1</div>
<div class="abs" style="left:326.0px;top:366.20px"><svg width="25" height="25" viewBox="0 0 25 25" style="display:block;overflow:hidden"><g style="filter:blur(0.3px)"><rect x="18" y="3.700" width="1.900" height="15.500" fill="#2b1d18"/><path d="M6.500 13.500 L10 12 L12.500 8 H18 V20.600 H7.500 L6.500 18 Z" fill="#e2612f"/><path d="M7 17.500 H18 V20.600 H7.500 Z" fill="#c94d20"/><path d="M12.500 8 H17 V11 H12.500 Z" fill="#b8532f"/><ellipse cx="7.200" cy="12.400" rx="3" ry="2.200" fill="#46556b"/><ellipse cx="5.400" cy="12" rx="1.300" ry="1" fill="#8ea0b8"/><circle cx="14.800" cy="10" r="1" fill="#5a1e10"/><rect x="13.500" y="14.600" width="2.400" height="1.200" fill="#fbe6da"/><path d="M19.500 19.500 L21.700 21.800" stroke="#9a9a9a" stroke-width=".7"/><rect x="8" y="16" width="2.500" height="2" fill="#7a2a14"/></g></svg></div>
<div class="td" style="left:384px;top:368.00px">探矿钻机</div>
<div class="td lk" style="left:505px;top:368.00px">MFR9LEQQZT48</div>
<div class="td" style="left:686px;top:368.00px">华夏巨匠ZLJ...</div>
<div class="td" style="left:807px;top:368.00px">西安雀维</div>
<div class="bdg" style="left:928px;top:369.40px;background:#f80d0f">运行异常</div>

<div class="abs" style="left:1140px;top:calc(377.0px + -6px);width:12px;height:12px;background:#eeeeee"></div><div class="abs" style="left:1152px;top:calc(377.0px + -6px);width:12px;height:12px;background:#dedede"></div><div class="abs" style="left:1164px;top:calc(377.0px + -6px);width:12px;height:12px;background:#d2d2d2"></div><div class="abs" style="left:1176px;top:calc(377.0px + -6px);width:12px;height:12px;background:#cccccc"></div><div class="abs" style="left:1188px;top:calc(377.0px + -6px);width:12px;height:12px;background:#c4c4c4"></div><div class="abs" style="left:1200px;top:calc(377.0px + -6px);width:12px;height:12px;background:#dedede"></div><div class="abs" style="left:1212px;top:calc(377.0px + -6px);width:12px;height:12px;background:#f4f4f4"></div>
<div class="td" style="left:1252px;top:368.00px">否</div>
<div class="td" style="left:1353px;top:368.00px">生成制造类</div>
<div class="td" style="left:1474px;top:368.00px">安保部</div>
<div class="td" style="left:1575px;top:368.00px;letter-spacing:.85px">2023-11-27</div>
<div class="abs" style="left:1686px;top:366.00px"><svg width="28" height="24" viewBox="0 0 28 24"><g fill="#555"><rect x="3" y="1" width="2" height="2.600"/><rect x="5.600" y="1.400" width="2.400" height="2.200" opacity=".7"/><rect x="8.600" y="1" width="2" height="2.600"/><rect x="11.200" y="1.400" width="2.400" height="2.200" opacity=".6"/><rect x="14.200" y="1" width="2.200" height="2.600"/><rect x="17" y="1.400" width="2.200" height="2.200" opacity=".7"/><rect x="19.800" y="1" width="3" height="2.600" opacity=".8"/></g><rect x="2" y="4" width="25" height="15.500" fill="#eceeee"/><rect x="5" y="4.500" width="12.500" height="14" fill="#8a9595"/><rect x="17.5" y="4.500" width="9.500" height="14" fill="#b3b7b7"/><path d="M1 8 L5 11 V8 Z" fill="#e4e6e6"/><circle cx="4.200" cy="21.400" r=".9" fill="#4bbf5a"/><rect x="6.500" y="21" width="6" height=".8" fill="#aaa"/><rect x="14" y="21" width="7" height=".8" fill="#bbb"/></svg></div>
<div class="td op" style="left:1756px;top:368.00px">修改</div>
<div class="td op" style="left:1798px;top:368.00px">详情</div>
<svg class="abs" style="left:1840px;top:376.40px" width="18" height="5" viewBox="0 0 18 5"><g fill="#a4a4a4"><circle cx="2" cy="2.200" r="1.850"/><circle cx="8.300" cy="2.200" r="1.850"/><circle cx="14.600" cy="2.200" r="1.850"/></g></svg>
<div class="cb" style="left:213px;top:408.00px"></div>
<div class="td" style="left:247px;width:60px;text-align:center;top:407.00px">2</div>
<div class="abs" style="left:326.0px;top:405.20px"><svg width="25" height="25" viewBox="0 0 25 25" style="display:block;overflow:hidden"><g style="filter:blur(0.3px)"><rect x="18" y="3.700" width="1.900" height="15.500" fill="#2b1d18"/><path d="M6.500 13.500 L10 12 L12.500 8 H18 V20.600 H7.500 L6.500 18 Z" fill="#e2612f"/><path d="M7 17.500 H18 V20.600 H7.500 Z" fill="#c94d20"/><path d="M12.500 8 H17 V11 H12.500 Z" fill="#b8532f"/><ellipse cx="7.200" cy="12.400" rx="3" ry="2.200" fill="#46556b"/><ellipse cx="5.400" cy="12" rx="1.300" ry="1" fill="#8ea0b8"/><circle cx="14.800" cy="10" r="1" fill="#5a1e10"/><rect x="13.500" y="14.600" width="2.400" height="1.200" fill="#fbe6da"/><path d="M19.500 19.500 L21.700 21.800" stroke="#9a9a9a" stroke-width=".7"/><rect x="8" y="16" width="2.500" height="2" fill="#7a2a14"/></g></svg></div>
<div class="td" style="left:384px;top:407.00px">探矿钻机</div>
<div class="td lk" style="left:505px;top:407.00px">UU677FKBC3ZA</div>
<div class="td" style="left:686px;top:407.00px">华夏巨匠ZLJ...</div>
<div class="td" style="left:807px;top:407.00px">西安雀维信...</div>
<div class="bdg" style="left:928px;top:408.40px;background:#41bb49">运行正常</div>
<div class="abs" style="left:1032px;top:calc(416.0px + -6px);width:12px;height:12px;background:#e6e6e6"></div><div class="abs" style="left:1044px;top:calc(416.0px + -6px);width:12px;height:12px;background:#dcdcdc"></div><div class="abs" style="left:1056px;top:calc(416.0px + -6px);width:12px;height:12px;background:#c8c8c8"></div><div class="abs" style="left:1068px;top:calc(416.0px + -6px);width:12px;height:12px;background:#f0f0f0"></div><div class="abs" style="left:1032px;top:calc(416.0px + 6px);width:12px;height:6px;background:#f4f4f4"></div><div class="abs" style="left:1044px;top:calc(416.0px + 6px);width:12px;height:6px;background:#f0f0f0"></div><div class="abs" style="left:1056px;top:calc(416.0px + 6px);width:12px;height:6px;background:#e6e6e6"></div><div class="abs" style="left:1068px;top:calc(416.0px + 6px);width:12px;height:6px;background:#f8f8f8"></div>
<div class="abs" style="left:1140px;top:calc(416.0px + -9px);width:12px;height:12px;background:#f6f6f6"></div><div class="abs" style="left:1152px;top:calc(416.0px + -9px);width:12px;height:12px;background:#e6e6e6"></div><div class="abs" style="left:1164px;top:calc(416.0px + -9px);width:12px;height:12px;background:#dedede"></div><div class="abs" style="left:1176px;top:calc(416.0px + -9px);width:12px;height:12px;background:#d4d4d4"></div><div class="abs" style="left:1188px;top:calc(416.0px + -9px);width:12px;height:12px;background:#cccccc"></div><div class="abs" style="left:1200px;top:calc(416.0px + -9px);width:12px;height:12px;background:#e4e4e4"></div><div class="abs" style="left:1152px;top:calc(416.0px + 3px);width:12px;height:5px;background:#f6f6f6"></div><div class="abs" style="left:1164px;top:calc(416.0px + 3px);width:12px;height:5px;background:#f2f2f2"></div><div class="abs" style="left:1176px;top:calc(416.0px + 3px);width:12px;height:5px;background:#f0f0f0"></div><div class="abs" style="left:1188px;top:calc(416.0px + 3px);width:12px;height:5px;background:#eeeeee"></div><div class="abs" style="left:1200px;top:calc(416.0px + 3px);width:12px;height:5px;background:#f2f2f2"></div><div class="abs" style="left:1212px;top:calc(416.0px + 3px);width:12px;height:5px;background:#f6f6f6"></div>
<div class="td" style="left:1252px;top:407.00px">否</div>
<div class="td" style="left:1353px;top:407.00px">机械设备</div>
<div class="td" style="left:1474px;top:407.00px">安保部</div>
<div class="td" style="left:1575px;top:407.00px;letter-spacing:.85px">2023-11-27</div>
<div class="abs" style="left:1686px;top:405.00px"><svg width="28" height="24" viewBox="0 0 28 24"><g fill="#555"><rect x="3" y="1" width="2" height="2.600"/><rect x="5.600" y="1.400" width="2.400" height="2.200" opacity=".7"/><rect x="8.600" y="1" width="2" height="2.600"/><rect x="11.200" y="1.400" width="2.400" height="2.200" opacity=".6"/><rect x="14.200" y="1" width="2.200" height="2.600"/><rect x="17" y="1.400" width="2.200" height="2.200" opacity=".7"/><rect x="19.800" y="1" width="3" height="2.600" opacity=".8"/></g><rect x="2" y="4" width="25" height="15.500" fill="#eceeee"/><rect x="5" y="4.500" width="12.500" height="14" fill="#8a9595"/><rect x="17.5" y="4.500" width="9.500" height="14" fill="#b3b7b7"/><circle cx="4.200" cy="21.400" r=".9" fill="#4bbf5a"/><rect x="6.500" y="21" width="6" height=".8" fill="#aaa"/><rect x="14" y="21" width="7" height=".8" fill="#bbb"/></svg></div>
<div class="td op" style="left:1756px;top:407.00px">修改</div>
<div class="td op" style="left:1798px;top:407.00px">详情</div>
<svg class="abs" style="left:1840px;top:415.40px" width="18" height="5" viewBox="0 0 18 5"><g fill="#a4a4a4"><circle cx="2" cy="2.200" r="1.850"/><circle cx="8.300" cy="2.200" r="1.850"/><circle cx="14.600" cy="2.200" r="1.850"/></g></svg>
<div class="cb" style="left:213px;top:447.00px"></div>
<div class="td" style="left:247px;width:60px;text-align:center;top:446.50px">3</div>
<div class="abs" style="left:326.0px;top:444.70px"><svg width="25" height="25" viewBox="0 0 25 25" style="display:block;overflow:hidden"><g style="filter:blur(0.35px)"><rect width="25" height="25" fill="#b2bbd9"/><path d="M2 0 L9 12 M5 0 L11 10 M0 3 L5 13" stroke="#d6dbee" stroke-width="1.300"/><rect x="18.500" y="0" width="6.500" height="25" fill="#c9593a"/><rect x="19" y="0" width="4" height="2.500" fill="#4a2418"/><rect x="23" y="0" width="2" height="12" fill="#b9bfd6"/><rect x="19.500" y="14" width="5.500" height="8" fill="#6a3424"/><rect x="8" y="4.700" width="11" height="18" fill="#e5562e"/><rect x="10" y="6" width="8" height="14" fill="#ec5c33"/><rect x="8" y="3.500" width="3" height="2" fill="#d96a4a"/><rect x="10.800" y="7.500" width="1.200" height="2.200" fill="#8a1e10"/><rect x="11" y="20.300" width="5.500" height="1.700" fill="#7a1a0e"/><ellipse cx="4" cy="16.500" rx="4.300" ry="4.900" fill="#2f807c"/><circle cx="1.800" cy="16.300" r="1.100" fill="#9fdcda"/><circle cx="5" cy="13.500" r="1" fill="#5aa7a2"/><rect x="0" y="21.500" width="4.500" height="3.500" fill="#d9b690"/><rect x="4.500" y="22.600" width="20.500" height="2.400" fill="#d9603a"/></g></svg></div>
<div class="td" style="left:384px;top:446.50px">探矿钻机</div>
<div class="td lk" style="left:505px;top:446.50px">BJ0RTMZJ323K</div>
<div class="td" style="left:686px;top:446.50px">华夏巨匠ZLJ...</div>
<div class="td" style="left:807px;top:446.50px">河南工程电...</div>
<div class="bdg" style="left:928px;top:447.90px;background:#41bb49">运行正常</div>
<div class="abs" style="left:1032px;top:calc(455.5px + -9px);width:12px;height:16px;background:#f0f0f0"></div><div class="abs" style="left:1044px;top:calc(455.5px + -9px);width:12px;height:16px;background:#e8e8e8"></div><div class="abs" style="left:1056px;top:calc(455.5px + -9px);width:12px;height:16px;background:#eaeaea"></div><div class="abs" style="left:1068px;top:calc(455.5px + -9px);width:12px;height:16px;background:#f4f4f4"></div>
<div class="abs" style="left:1140px;top:calc(455.5px + -4px);width:12px;height:14px;background:#f4f4f4"></div><div class="abs" style="left:1152px;top:calc(455.5px + -4px);width:12px;height:14px;background:#eeeeee"></div><div class="abs" style="left:1164px;top:calc(455.5px + -4px);width:12px;height:14px;background:#e6e6e6"></div><div class="abs" style="left:1176px;top:calc(455.5px + -4px);width:12px;height:14px;background:#e6e6e6"></div><div class="abs" style="left:1188px;top:calc(455.5px + -4px);width:12px;height:14px;background:#e2e2e2"></div><div class="abs" style="left:1200px;top:calc(455.5px + -4px);width:12px;height:14px;background:#eeeeee"></div><div class="abs" style="left:1212px;top:calc(455.5px + -4px);width:12px;height:14px;background:#f8f8f8"></div>
<div class="td" style="left:1252px;top:446.50px">否</div>
<div class="td" style="left:1353px;top:446.50px">生成制造类</div>
<div class="td" style="left:1474px;top:446.50px"></div>
<div class="td" style="left:1575px;top:446.50px;letter-spacing:.85px">2023-11-27</div>
<div class="abs" style="left:1686px;top:444.50px"><svg width="28" height="24" viewBox="0 0 28 24"><g fill="#555"><rect x="3" y="1" width="2" height="2.600"/><rect x="5.600" y="1.400" width="2.400" height="2.200" opacity=".7"/><rect x="8.600" y="1" width="2" height="2.600"/><rect x="11.200" y="1.400" width="2.400" height="2.200" opacity=".6"/><rect x="14.200" y="1" width="2.200" height="2.600"/><rect x="17" y="1.400" width="2.200" height="2.200" opacity=".7"/><rect x="19.800" y="1" width="3" height="2.600" opacity=".8"/></g><rect x="0" y="4" width="25" height="15.500" fill="#eceeee"/><rect x="3" y="4.500" width="12.500" height="14" fill="#8a9595"/><rect x="15.5" y="4.500" width="9.500" height="14" fill="#b3b7b7"/><circle cx="4.200" cy="21.400" r=".9" fill="#4bbf5a"/><rect x="6.500" y="21" width="6" height=".8" fill="#aaa"/><rect x="14" y="21" width="7" height=".8" fill="#bbb"/></svg></div>
<div class="td op" style="left:1756px;top:446.50px">修改</div>
<div class="td op" style="left:1798px;top:446.50px">详情</div>
<svg class="abs" style="left:1840px;top:454.90px" width="18" height="5" viewBox="0 0 18 5"><g fill="#a4a4a4"><circle cx="2" cy="2.200" r="1.850"/><circle cx="8.300" cy="2.200" r="1.850"/><circle cx="14.600" cy="2.200" r="1.850"/></g></svg>
<div class="cb" style="left:213px;top:486.00px"></div>
<div class="td" style="left:247px;width:60px;text-align:center;top:486.00px">4</div>
<div class="abs" style="left:326.0px;top:484.20px"><svg width="25" height="25" viewBox="0 0 25 25" style="display:block;overflow:hidden"><g style="filter:blur(0.35px)"><rect width="25" height="25" fill="#c8ccd1"/><rect x="0" y="12" width="25" height="13" fill="#7a9fb4"/><rect x="20" y="10" width="5" height="6" fill="#b9c6cf"/><rect x="0" y="0" width="4" height="1.500" fill="#0a0a0a"/><rect x="5.500" y="0" width="3.500" height="1" fill="#2a3a34"/><path d="M8 4 L16 2.600 L16.500 0.800 L19.500 1.200 L23 4 L22.600 11 L20.500 19.500 L17 23.600 L9.500 23.200 L3.500 17.500 L5.200 13.200 L4 8.200 Z" fill="#d4564a"/><path d="M8.500 4.500 L16 3 L22 5 L21 8 L9 8 Z" fill="#de6a5c"/><circle cx="7.200" cy="8.600" r="2.300" fill="#b3483c"/><circle cx="7.200" cy="8.600" r="1" fill="#c9685a"/><path d="M3.500 15.500 L6 14.500 L8 18 L6 19.500 Z" fill="#6e2420"/><path d="M14 10 L17.500 8.500 L17 12 Z" fill="#f2b8ac"/><path d="M15 11.500 L19 12.500 L18 15 L15 14 Z" fill="#9c3a30"/><path d="M9 20 L16 17 L18 21 L12 23.300 Z" fill="#b84a40"/><path d="M8.500 19.500 L11 18.500 L10 22 Z" fill="#e9c0b8"/></g></svg></div>
<div class="td" style="left:384px;top:486.00px">臂架泵</div>
<div class="td lk" style="left:505px;top:486.00px">TGOI7AILWHF4</div>
<div class="td" style="left:686px;top:486.00px">TOST-305</div>
<div class="td" style="left:807px;top:486.00px">河南工程电...</div>
<div class="bdg" style="left:928px;top:487.40px;background:#41bb49">运行正常</div>
<div class="abs" style="left:1032px;top:calc(495.0px + -5px);width:12px;height:12px;background:#e2e2e2"></div><div class="abs" style="left:1044px;top:calc(495.0px + -5px);width:12px;height:12px;background:#c8c8c8"></div>
<div class="abs" style="left:1140px;top:calc(495.0px + -7px);width:12px;height:6px;background:#f8f8f8"></div><div class="abs" style="left:1152px;top:calc(495.0px + -7px);width:12px;height:6px;background:#f2f2f2"></div><div class="abs" style="left:1164px;top:calc(495.0px + -7px);width:12px;height:6px;background:#f0f0f0"></div><div class="abs" style="left:1176px;top:calc(495.0px + -7px);width:12px;height:6px;background:#f2f2f2"></div><div class="abs" style="left:1188px;top:calc(495.0px + -7px);width:12px;height:6px;background:#f0f0f0"></div><div class="abs" style="left:1200px;top:calc(495.0px + -7px);width:12px;height:6px;background:#f4f4f4"></div><div class="abs" style="left:1212px;top:calc(495.0px + -7px);width:12px;height:6px;background:#fafafa"></div><div class="abs" style="left:1140px;top:calc(495.0px + -1px);width:12px;height:9px;background:#f4f4f4"></div><div class="abs" style="left:1152px;top:calc(495.0px + -1px);width:12px;height:9px;background:#eeeeee"></div><div class="abs" style="left:1164px;top:calc(495.0px + -1px);width:12px;height:9px;background:#dedede"></div><div class="abs" style="left:1176px;top:calc(495.0px + -1px);width:12px;height:9px;background:#e2e2e2"></div><div class="abs" style="left:1188px;top:calc(495.0px + -1px);width:12px;height:9px;background:#d8d8d8"></div><div class="abs" style="left:1200px;top:calc(495.0px + -1px);width:12px;height:9px;background:#e2e2e2"></div><div class="abs" style="left:1212px;top:calc(495.0px + -1px);width:12px;height:9px;background:#f6f6f6"></div>
<div class="td" style="left:1252px;top:486.00px">否</div>
<div class="td" style="left:1353px;top:486.00px">卫生间设备</div>
<div class="td" style="left:1474px;top:486.00px">生产部</div>
<div class="td" style="left:1575px;top:486.00px;letter-spacing:.85px"></div>
<div class="abs" style="left:1686px;top:484.00px"><svg width="28" height="24" viewBox="0 0 28 24"><g fill="#555"><rect x="3" y="1" width="2" height="2.600"/><rect x="5.600" y="1.400" width="2.400" height="2.200" opacity=".7"/><rect x="8.600" y="1" width="2" height="2.600"/><rect x="11.200" y="1.400" width="2.400" height="2.200" opacity=".6"/><rect x="14.200" y="1" width="2.200" height="2.600"/><rect x="17" y="1.400" width="2.200" height="2.200" opacity=".7"/><rect x="19.800" y="1" width="3" height="2.600" opacity=".8"/></g><rect x="1" y="4" width="25" height="15.500" fill="#eceeee"/><rect x="4" y="4.500" width="12.500" height="14" fill="#8a9595"/><rect x="16.5" y="4.500" width="9.500" height="14" fill="#b3b7b7"/><circle cx="4.200" cy="21.400" r=".9" fill="#4bbf5a"/><rect x="6.500" y="21" width="6" height=".8" fill="#aaa"/><rect x="14" y="21" width="7" height=".8" fill="#bbb"/></svg></div>
<div class="td op" style="left:1756px;top:486.00px">修改</div>
<div class="td op" style="left:1798px;top:486.00px">详情</div>
<svg class="abs" style="left:1840px;top:494.40px" width="18" height="5" viewBox="0 0 18 5"><g fill="#a4a4a4"><circle cx="2" cy="2.200" r="1.850"/><circle cx="8.300" cy="2.200" r="1.850"/><circle cx="14.600" cy="2.200" r="1.850"/></g></svg>
<div class="cb" style="left:213px;top:525.00px"></div>
<div class="td" style="left:247px;width:60px;text-align:center;top:525.00px">5</div>
<div class="abs" style="left:326.0px;top:523.20px"><svg width="25" height="25" viewBox="0 0 25 25" style="display:block;overflow:hidden"><g style="filter:blur(0.35px)"><rect width="25" height="25" fill="#fff"/><rect x="1" y="7.400" width="22.600" height="15.200" fill="#ebebeb"/><rect x="1.200" y="7" width="22.400" height="1.400" fill="#f6f6f6"/><rect x="0" y="4.400" width="6" height="3.100" rx=".6" fill="#0c0c0c"/><rect x="13" y="5" width="10.700" height="1.700" rx=".6" fill="#3a3a3a"/><rect x="11" y="3" width="3" height=".9" fill="#555"/><rect x="14" y="3.100" width="6" height=".5" fill="#ccc"/><rect x="5" y="8" width="14" height="2.900" rx=".6" fill="#15111a"/><rect x="8" y="9.600" width="4" height="1.300" fill="#4fb5c8"/><rect x="13.800" y="9.300" width="4.400" height="1.600" fill="#b0185a"/><rect x="2" y="9" width="1.800" height=".9" fill="#666"/><rect x="5" y="18.900" width="13.400" height=".9" fill="#222"/><rect x="5" y="20.200" width="13.400" height=".5" fill="#fafafa"/><rect x="1" y="22.600" width="22.600" height=".6" fill="#f4f4f4"/></g></svg></div>
<div class="td" style="left:384px;top:525.00px">打印机</div>
<div class="td lk" style="left:505px;top:525.00px">733H2KE40298</div>
<div class="td" style="left:686px;top:525.00px">惠普打印机</div>
<div class="td" style="left:807px;top:525.00px">西安雀维信...</div>
<div class="bdg" style="left:928px;top:526.40px;background:#41bb49">运行正常</div>
<div class="abs" style="left:1020px;top:calc(534.0px + -6px);width:12px;height:12px;background:#f4f4f4"></div><div class="abs" style="left:1032px;top:calc(534.0px + -6px);width:12px;height:12px;background:#f2f2f2"></div><div class="abs" style="left:1044px;top:calc(534.0px + -6px);width:12px;height:12px;background:#bebebe"></div><div class="abs" style="left:1056px;top:calc(534.0px + -6px);width:12px;height:12px;background:#dedede"></div>
<div class="abs" style="left:1143px;top:calc(534.0px + -6px);width:12px;height:12px;background:#f2f2f2"></div><div class="abs" style="left:1155px;top:calc(534.0px + -6px);width:12px;height:12px;background:#d0d0d0"></div><div class="abs" style="left:1167px;top:calc(534.0px + -6px);width:12px;height:12px;background:#cccccc"></div><div class="abs" style="left:1179px;top:calc(534.0px + -6px);width:12px;height:12px;background:#cccccc"></div><div class="abs" style="left:1191px;top:calc(534.0px + -6px);width:12px;height:12px;background:#cccccc"></div><div class="abs" style="left:1203px;top:calc(534.0px + -6px);width:12px;height:12px;background:#dedede"></div><div class="abs" style="left:1215px;top:calc(534.0px + -6px);width:12px;height:12px;background:#f8f8f8"></div>
<div class="td" style="left:1252px;top:525.00px">否</div>
<div class="td" style="left:1353px;top:525.00px">办公设备</div>
<div class="td" style="left:1474px;top:525.00px">销售部</div>
<div class="td" style="left:1575px;top:525.00px;letter-spacing:.85px"></div>
<div class="abs" style="left:1686px;top:523.00px"><svg width="28" height="24" viewBox="0 0 28 24"><g fill="#555"><rect x="3" y="1" width="2" height="2.600"/><rect x="5.600" y="1.400" width="2.400" height="2.200" opacity=".7"/><rect x="8.600" y="1" width="2" height="2.600"/><rect x="11.200" y="1.400" width="2.400" height="2.200" opacity=".6"/><rect x="14.200" y="1" width="2.200" height="2.600"/><rect x="17" y="1.400" width="2.200" height="2.200" opacity=".7"/><rect x="19.800" y="1" width="3" height="2.600" opacity=".8"/></g><rect x="2" y="4" width="25" height="15.500" fill="#eceeee"/><rect x="5" y="4.500" width="12.500" height="14" fill="#8a9595"/><rect x="17.5" y="4.500" width="9.500" height="14" fill="#b3b7b7"/><path d="M0 6 L5 10 V6 Z" fill="#e4e6e6"/><circle cx="4.200" cy="21.400" r=".9" fill="#4bbf5a"/><rect x="6.500" y="21" width="6" height=".8" fill="#aaa"/><rect x="14" y="21" width="7" height=".8" fill="#bbb"/></svg></div>
<div class="td op" style="left:1756px;top:525.00px">修改</div>
<div class="td op" style="left:1798px;top:525.00px">详情</div>
<svg class="abs" style="left:1840px;top:533.40px" width="18" height="5" viewBox="0 0 18 5"><g fill="#a4a4a4"><circle cx="2" cy="2.200" r="1.850"/><circle cx="8.300" cy="2.200" r="1.850"/><circle cx="14.600" cy="2.200" r="1.850"/></g></svg>
<div class="cb" style="left:213px;top:564.00px"></div>
<div class="td" style="left:247px;width:60px;text-align:center;top:564.00px">6</div>
<div class="abs" style="left:326.0px;top:562.20px"><svg width="25" height="25" viewBox="0 0 25 25" style="display:block;overflow:hidden"><g style="filter:blur(0.35px)"><rect width="25" height="25" fill="#fff"/><rect x="0" y="0" width="25" height="1.150" rx=".5" fill="#111"/><rect x="0" y="23.900" width="25" height="1.150" rx=".5" fill="#111"/><rect x="3" y="4.900" width="19" height="14.300" rx="2.600" fill="#e3e3e3"/><rect x="20.400" y="5.200" width="1.600" height="13.700" rx=".8" fill="#9c9c9c"/><rect x="4" y="5" width="14" height="3" rx="1.500" fill="#ececec"/><rect x="7" y="10.900" width="2.600" height=".7" fill="#c4c4c4"/><rect x="14" y="10.900" width="2" height=".7" fill="#cfcfcf"/><rect x="7.300" y="15.900" width="8.800" height="2.200" rx=".9" fill="#050505"/><rect x="9" y="18.400" width="1.500" height=".5" fill="#d88"/><rect x="13.500" y="18.400" width="1.500" height=".5" fill="#88a"/></g></svg></div>
<div class="td" style="left:384px;top:564.00px">电热水器</div>
<div class="td lk" style="left:505px;top:564.00px">733H2KE40299</div>
<div class="td" style="left:686px;top:564.00px">康佳热水器</div>
<div class="td" style="left:807px;top:564.00px">西安雀维信...</div>
<div class="bdg" style="left:928px;top:565.40px;background:#41bb49">运行正常</div>
<div class="abs" style="left:1032px;top:calc(573.0px + -7px);width:12px;height:9px;background:#d0d0d0"></div><div class="abs" style="left:1044px;top:calc(573.0px + -7px);width:12px;height:9px;background:#e2e2e2"></div><div class="abs" style="left:1032px;top:calc(573.0px + 2px);width:12px;height:6px;background:#ececec"></div><div class="abs" style="left:1044px;top:calc(573.0px + 2px);width:12px;height:6px;background:#ececec"></div>
<div class="abs" style="left:1143px;top:calc(573.0px + -7px);width:12px;height:10px;background:#f6f6f6"></div><div class="abs" style="left:1155px;top:calc(573.0px + -7px);width:12px;height:10px;background:#dedede"></div><div class="abs" style="left:1167px;top:calc(573.0px + -7px);width:12px;height:10px;background:#dcdcdc"></div><div class="abs" style="left:1179px;top:calc(573.0px + -7px);width:12px;height:10px;background:#d4d4d4"></div><div class="abs" style="left:1191px;top:calc(573.0px + -7px);width:12px;height:10px;background:#dadada"></div><div class="abs" style="left:1203px;top:calc(573.0px + -7px);width:12px;height:10px;background:#eaeaea"></div><div class="abs" style="left:1143px;top:calc(573.0px + 3px);width:12px;height:5px;background:#fafafa"></div><div class="abs" style="left:1155px;top:calc(573.0px + 3px);width:12px;height:5px;background:#f2f2f2"></div><div class="abs" style="left:1167px;top:calc(573.0px + 3px);width:12px;height:5px;background:#f0f0f0"></div><div class="abs" style="left:1179px;top:calc(573.0px + 3px);width:12px;height:5px;background:#f0f0f0"></div><div class="abs" style="left:1191px;top:calc(573.0px + 3px);width:12px;height:5px;background:#f2f2f2"></div><div class="abs" style="left:1203px;top:calc(573.0px + 3px);width:12px;height:5px;background:#f6f6f6"></div><div class="abs" style="left:1215px;top:calc(573.0px + 3px);width:12px;height:5px;background:#f8f8f8"></div>
<div class="td" style="left:1252px;top:564.00px">否</div>
<div class="td" style="left:1353px;top:564.00px">卫生间设备</div>
<div class="td" style="left:1474px;top:564.00px">销售部</div>
<div class="td" style="left:1575px;top:564.00px;letter-spacing:.85px"></div>
<div class="abs" style="left:1686px;top:562.00px"><svg width="28" height="24" viewBox="0 0 28 24"><g fill="#555"><rect x="3" y="1" width="2" height="2.600"/><rect x="5.600" y="1.400" width="2.400" height="2.200" opacity=".7"/><rect x="8.600" y="1" width="2" height="2.600"/><rect x="11.200" y="1.400" width="2.400" height="2.200" opacity=".6"/><rect x="14.200" y="1" width="2.200" height="2.600"/><rect x="17" y="1.400" width="2.200" height="2.200" opacity=".7"/><rect x="19.800" y="1" width="3" height="2.600" opacity=".8"/></g><rect x="2" y="4" width="25" height="15.500" fill="#eceeee"/><rect x="5" y="4.500" width="12.500" height="14" fill="#8a9595"/><rect x="17.5" y="4.500" width="9.500" height="14" fill="#b3b7b7"/><rect x="5" y="14" width="22" height="5" fill="#a9b0b0" opacity=".6"/><circle cx="4.200" cy="21.400" r=".9" fill="#4bbf5a"/><rect x="6.500" y="21" width="6" height=".8" fill="#aaa"/><rect x="14" y="21" width="7" height=".8" fill="#bbb"/></svg></div>
<div class="td op" style="left:1756px;top:564.00px">修改</div>
<div class="td op" style="left:1798px;top:564.00px">详情</div>
<svg class="abs" style="left:1840px;top:572.40px" width="18" height="5" viewBox="0 0 18 5"><g fill="#a4a4a4"><circle cx="2" cy="2.200" r="1.850"/><circle cx="8.300" cy="2.200" r="1.850"/><circle cx="14.600" cy="2.200" r="1.850"/></g></svg>
<div class="cb" style="left:213px;top:603.00px"></div>
<div class="td" style="left:247px;width:60px;text-align:center;top:603.50px">7</div>
<div class="abs" style="left:326.0px;top:601.70px"><svg width="25" height="25" viewBox="0 0 25 25" style="display:block;overflow:hidden"><g style="filter:blur(0.35px)"><rect width="25" height="25" fill="#fff"/><rect x="0.900" y="1.300" width="13" height="23" fill="#dcdcdc"/><rect x="0.900" y="1.300" width="2.400" height="23" fill="#b5b5b5"/><g fill="#6a6a6a"><rect x="1.100" y="7" width="1.800" height="1.400"/><rect x="1.100" y="9.500" width="1.800" height="1.400"/><rect x="1.100" y="12" width="1.800" height="1.400"/><rect x="1.100" y="14.500" width="1.800" height="1.400"/><rect x="1.100" y="17" width="1.800" height="1.400"/><rect x="1.100" y="19.500" width="1.800" height="1.400"/></g><rect x="4.500" y="1.500" width="9" height="22" fill="#e2e2e2"/><rect x="6.800" y="2.600" width="2" height="2" fill="#4656a4"/><rect x="9.200" y="3.200" width="2.400" height="1.400" fill="#5a68b0"/><rect x="1" y="23.400" width="13" height="1" fill="#9a9a9a"/><rect x="12.600" y="22.800" width="1.300" height="1.500" fill="#555"/><rect x="15.200" y="1.5" width="8.600" height="1.500" fill="#c4c6c8"/><rect x="15.400" y="2.9" width="8.400" height="1.900" fill="#1a1a1a"/><rect x="15.200" y="6.3" width="8.600" height="1.500" fill="#c4c6c8"/><rect x="15.400" y="7.699999999999999" width="8.400" height="1.900" fill="#1a1a1a"/><rect x="15.200" y="11" width="8.600" height="1.500" fill="#c4c6c8"/><rect x="15.400" y="12.4" width="8.400" height="1.900" fill="#1a1a1a"/><rect x="15.200" y="15.6" width="8.600" height="1.500" fill="#c4c6c8"/><rect x="15.400" y="17.0" width="8.400" height="1.900" fill="#1a1a1a"/><rect x="15.200" y="20.1" width="8.600" height="1.500" fill="#c4c6c8"/><rect x="15.400" y="21.5" width="8.400" height="1.900" fill="#1a1a1a"/></g></svg></div>
<div class="td" style="left:384px;top:603.50px">中央空调</div>
<div class="td lk" style="left:505px;top:603.50px">17PE05O403KL</div>
<div class="td" style="left:686px;top:603.50px">格力</div>
<div class="td" style="left:807px;top:603.50px">西安雀维信...</div>
<div class="bdg" style="left:928px;top:604.90px;background:#fdc912">过保运行</div>
<div class="abs" style="left:1020px;top:calc(612.5px + -9px);width:12px;height:8px;background:#fafafa"></div><div class="abs" style="left:1032px;top:calc(612.5px + -9px);width:12px;height:8px;background:#f0f0f0"></div><div class="abs" style="left:1044px;top:calc(612.5px + -9px);width:12px;height:8px;background:#e8e8e8"></div><div class="abs" style="left:1056px;top:calc(612.5px + -9px);width:12px;height:8px;background:#e8e8e8"></div><div class="abs" style="left:1068px;top:calc(612.5px + -9px);width:12px;height:8px;background:#fafafa"></div><div class="abs" style="left:1020px;top:calc(612.5px + -1px);width:12px;height:10px;background:#f6f6f6"></div><div class="abs" style="left:1032px;top:calc(612.5px + -1px);width:12px;height:10px;background:#d6d6d6"></div><div class="abs" style="left:1044px;top:calc(612.5px + -1px);width:12px;height:10px;background:#e2e2e2"></div><div class="abs" style="left:1056px;top:calc(612.5px + -1px);width:12px;height:10px;background:#dedede"></div><div class="abs" style="left:1068px;top:calc(612.5px + -1px);width:12px;height:10px;background:#f6f6f6"></div>
<div class="abs" style="left:1176px;top:calc(612.5px + -12px);width:12px;height:11px;background:#eaeaea"></div><div class="abs" style="left:1188px;top:calc(612.5px + -12px);width:12px;height:11px;background:#e8e8e8"></div><div class="abs" style="left:1200px;top:calc(612.5px + -12px);width:12px;height:11px;background:#f2f2f2"></div><div class="abs" style="left:1140px;top:calc(612.5px + -1px);width:12px;height:12px;background:#f2f2f2"></div><div class="abs" style="left:1152px;top:calc(612.5px + -1px);width:12px;height:12px;background:#eeeeee"></div><div class="abs" style="left:1164px;top:calc(612.5px + -1px);width:12px;height:12px;background:#ececec"></div><div class="abs" style="left:1176px;top:calc(612.5px + -1px);width:12px;height:12px;background:#e8e8e8"></div><div class="abs" style="left:1188px;top:calc(612.5px + -1px);width:12px;height:12px;background:#dcdcdc"></div><div class="abs" style="left:1200px;top:calc(612.5px + -1px);width:12px;height:12px;background:#e6e6e6"></div><div class="abs" style="left:1212px;top:calc(612.5px + -1px);width:12px;height:12px;background:#f6f6f6"></div>
<div class="td" style="left:1252px;top:603.50px">是</div>
<div class="td" style="left:1353px;top:603.50px">空调</div>
<div class="td" style="left:1474px;top:603.50px"></div>
<div class="td" style="left:1575px;top:603.50px;letter-spacing:.85px">2023-11-02</div>
<div class="abs" style="left:1686px;top:601.50px"><svg width="28" height="24" viewBox="0 0 28 24"><g fill="#555"><rect x="3" y="1" width="2" height="2.600"/><rect x="5.600" y="1.400" width="2.400" height="2.200" opacity=".7"/><rect x="8.600" y="1" width="2" height="2.600"/><rect x="11.200" y="1.400" width="2.400" height="2.200" opacity=".6"/><rect x="14.200" y="1" width="2.200" height="2.600"/><rect x="17" y="1.400" width="2.200" height="2.200" opacity=".7"/><rect x="19.800" y="1" width="3" height="2.600" opacity=".8"/></g><rect x="0" y="4" width="25" height="15.500" fill="#eceeee"/><rect x="3" y="4.500" width="12.500" height="14" fill="#8a9595"/><rect x="15.5" y="4.500" width="9.500" height="14" fill="#b3b7b7"/><circle cx="4.200" cy="21.400" r=".9" fill="#4bbf5a"/><rect x="6.500" y="21" width="6" height=".8" fill="#aaa"/><rect x="14" y="21" width="7" height=".8" fill="#bbb"/></svg></div>
<div class="td op" style="left:1756px;top:603.50px">修改</div>
<div class="td op" style="left:1798px;top:603.50px">详情</div>
<svg class="abs" style="left:1840px;top:611.90px" width="18" height="5" viewBox="0 0 18 5"><g fill="#a4a4a4"><circle cx="2" cy="2.200" r="1.850"/><circle cx="8.300" cy="2.200" r="1.850"/><circle cx="14.600" cy="2.200" r="1.850"/></g></svg>
<div class="cb" style="left:213px;top:642.00px"></div>
<div class="td" style="left:247px;width:60px;text-align:center;top:643.00px">8</div>
<div class="abs" style="left:326.0px;top:641.20px"><svg width="25" height="25" viewBox="0 0 25 25" style="display:block;overflow:hidden"><g style="filter:blur(0.35px)"><rect width="25" height="25" fill="#fff"/><rect x="4" y="2.900" width="17.800" height="12" fill="#3b8cd4"/><path d="M4 2.900 H9 L12.500 6.500 L9 11 L6 15 H4 Z" fill="#3f90d9"/><path d="M4 2.900 H7.500 L11.500 6 L9.500 5.800 Z" fill="#27457e"/><path d="M9 2.900 H21.800 V8 L15 9 L12.500 6.500 Z" fill="#dfe7f0"/><path d="M13.500 5.500 L21.800 4.500 V8.500 L15.500 8.800 Z" fill="#f0ae5a"/><path d="M6.500 14.900 L9.500 9.500 L11 9.200 L8.500 14.900 Z" fill="#e8a860"/><rect x="10.800" y="8.400" width="4.600" height="6" fill="#eef2fb"/><rect x="11.500" y="9.200" width="3.200" height="4.400" fill="#d6def2"/><rect x="15.800" y="8.900" width="6" height="6" fill="#1b4cae"/><path d="M17.500 10 L21.800 9.500 V14 L18 14.500 Z" fill="#5aa2e8"/><rect x="9" y="13.800" width="7" height="1.100" fill="#6aa8e6"/><rect x="3.700" y="14.900" width="18.400" height="2.700" fill="#17202c"/><path d="M0.400 20.600 L3.500 17.600 H22.300 L25 20.600 Z" fill="#e5e7eb"/><rect x="0.600" y="20.600" width="24.200" height=".6" fill="#f1f2f4"/></g></svg></div>
<div class="td" style="left:384px;top:643.00px">笔记本电脑</div>
<div class="td lk" style="left:505px;top:643.00px">V34Q2E7B671L</div>
<div class="td" style="left:686px;top:643.00px">华为</div>
<div class="td" style="left:807px;top:643.00px">西安雀维信...</div>
<div class="bdg" style="left:928px;top:644.40px;background:#41bb49">运行正常</div>
<div class="abs" style="left:1020px;top:calc(652.0px + -5px);width:12px;height:12px;background:#f6f6f6"></div><div class="abs" style="left:1032px;top:calc(652.0px + -5px);width:12px;height:12px;background:#e4e4e4"></div><div class="abs" style="left:1044px;top:calc(652.0px + -5px);width:12px;height:12px;background:#c2c2c2"></div>
<div class="abs" style="left:1140px;top:calc(652.0px + -8px);width:12px;height:5px;background:#f8f8f8"></div><div class="abs" style="left:1152px;top:calc(652.0px + -8px);width:12px;height:5px;background:#f2f2f2"></div><div class="abs" style="left:1164px;top:calc(652.0px + -8px);width:12px;height:5px;background:#f2f2f2"></div><div class="abs" style="left:1176px;top:calc(652.0px + -8px);width:12px;height:5px;background:#f2f2f2"></div><div class="abs" style="left:1188px;top:calc(652.0px + -8px);width:12px;height:5px;background:#f2f2f2"></div><div class="abs" style="left:1200px;top:calc(652.0px + -8px);width:12px;height:5px;background:#f4f4f4"></div><div class="abs" style="left:1140px;top:calc(652.0px + -3px);width:12px;height:10px;background:#f0f0f0"></div><div class="abs" style="left:1152px;top:calc(652.0px + -3px);width:12px;height:10px;background:#e8e8e8"></div><div class="abs" style="left:1164px;top:calc(652.0px + -3px);width:12px;height:10px;background:#d8d8d8"></div><div class="abs" style="left:1176px;top:calc(652.0px + -3px);width:12px;height:10px;background:#dcdcdc"></div><div class="abs" style="left:1188px;top:calc(652.0px + -3px);width:12px;height:10px;background:#d4d4d4"></div><div class="abs" style="left:1200px;top:calc(652.0px + -3px);width:12px;height:10px;background:#dcdcdc"></div><div class="abs" style="left:1212px;top:calc(652.0px + -3px);width:12px;height:10px;background:#f8f8f8"></div>
<div class="td" style="left:1252px;top:643.00px">否</div>
<div class="td" style="left:1353px;top:643.00px">电脑</div>
<div class="td" style="left:1474px;top:643.00px">商务部</div>
<div class="td" style="left:1575px;top:643.00px;letter-spacing:.85px"></div>
<div class="abs" style="left:1686px;top:641.00px"><svg width="28" height="24" viewBox="0 0 28 24"><g fill="#555"><rect x="3" y="1" width="2" height="2.600"/><rect x="5.600" y="1.400" width="2.400" height="2.200" opacity=".7"/><rect x="8.600" y="1" width="2" height="2.600"/><rect x="11.200" y="1.400" width="2.400" height="2.200" opacity=".6"/><rect x="14.200" y="1" width="2.200" height="2.600"/><rect x="17" y="1.400" width="2.200" height="2.200" opacity=".7"/><rect x="19.800" y="1" width="3" height="2.600" opacity=".8"/></g><rect x="1" y="4" width="25" height="15.500" fill="#eceeee"/><rect x="4" y="4.500" width="12.500" height="14" fill="#8a9595"/><rect x="16.5" y="4.500" width="9.500" height="14" fill="#b3b7b7"/><circle cx="4.200" cy="21.400" r=".9" fill="#4bbf5a"/><rect x="6.500" y="21" width="6" height=".8" fill="#aaa"/><rect x="14" y="21" width="7" height=".8" fill="#bbb"/></svg></div>
<div class="td op" style="left:1756px;top:643.00px">修改</div>
<div class="td op" style="left:1798px;top:643.00px">详情</div>
<svg class="abs" style="left:1840px;top:651.40px" width="18" height="5" viewBox="0 0 18 5"><g fill="#a4a4a4"><circle cx="2" cy="2.200" r="1.850"/><circle cx="8.300" cy="2.200" r="1.850"/><circle cx="14.600" cy="2.200" r="1.850"/></g></svg>
<div class="cb" style="left:213px;top:681.00px"></div>
<div class="td" style="left:247px;width:60px;text-align:center;top:682.00px">9</div>
<div class="abs" style="left:326.0px;top:680.20px"><svg width="25" height="25" viewBox="0 0 25 25" style="display:block;overflow:hidden"><g style="filter:blur(0.35px)"><rect width="25" height="25" fill="#fff"/><rect x="0" y="0.300" width="25" height=".5" fill="#dcdcdc"/><rect x="2" y="13" width="7" height=".5" fill="#efefef"/><rect x="17" y="13" width="6" height=".5" fill="#efefef"/><path d="M13.500 1 L16.200 3.200 L16 5 L17.900 6.200 L16.800 8.400 L15.700 9.600 L15.600 14 L16.200 15 L15.400 16.300 H11.300 L10.700 15 L11.200 14 L11 9.600 L9.800 8.200 L9.200 6.200 L10.800 5 L11 3.200 Z" fill="#f04343"/><path d="M12.800 4 L14.200 4 L14 13 L13 13 Z" fill="#f86a64"/><circle cx="11.600" cy="3.800" r=".6" fill="#7a1414"/><circle cx="15.500" cy="3.800" r=".6" fill="#7a1414"/><circle cx="16.200" cy="5.800" r=".5" fill="#8a1a1a"/><ellipse cx="13.300" cy="18.500" rx="2.900" ry="2.200" fill="#1d1a1a"/><ellipse cx="13.300" cy="22.700" rx="3.100" ry="2.500" fill="#2b2422"/><rect x="12" y="15.900" width="2.600" height="1.600" fill="#2a1212"/></g></svg></div>
<div class="td" style="left:384px;top:682.00px">室外消防栓</div>
<div class="td lk" style="left:505px;top:682.00px">K630OHWX191X</div>
<div class="td" style="left:686px;top:682.00px">百安消防</div>
<div class="td" style="left:807px;top:682.00px">西安雀维信...</div>
<div class="bdg" style="left:928px;top:683.40px;background:#41bb49">运行正常</div>
<div class="abs" style="left:1020px;top:calc(691.0px + -6px);width:12px;height:12px;background:#f6f6f6"></div><div class="abs" style="left:1032px;top:calc(691.0px + -6px);width:12px;height:12px;background:#d8d8d8"></div><div class="abs" style="left:1044px;top:calc(691.0px + -6px);width:12px;height:12px;background:#bcbcbc"></div>
<div class="abs" style="left:1140px;top:calc(691.0px + -6px);width:12px;height:12px;background:#ececec"></div><div class="abs" style="left:1152px;top:calc(691.0px + -6px);width:12px;height:12px;background:#dedede"></div><div class="abs" style="left:1164px;top:calc(691.0px + -6px);width:12px;height:12px;background:#c8c8c8"></div><div class="abs" style="left:1176px;top:calc(691.0px + -6px);width:12px;height:12px;background:#d2d2d2"></div><div class="abs" style="left:1188px;top:calc(691.0px + -6px);width:12px;height:12px;background:#cccccc"></div><div class="abs" style="left:1200px;top:calc(691.0px + -6px);width:12px;height:12px;background:#d8d8d8"></div><div class="abs" style="left:1212px;top:calc(691.0px + -6px);width:12px;height:12px;background:#f6f6f6"></div>
<div class="td" style="left:1252px;top:682.00px">否</div>
<div class="td" style="left:1353px;top:682.00px">消防类别</div>
<div class="td" style="left:1474px;top:682.00px">生产部</div>
<div class="td" style="left:1575px;top:682.00px;letter-spacing:.85px"></div>
<div class="abs" style="left:1686px;top:680.00px"><svg width="28" height="24" viewBox="0 0 28 24"><g fill="#555"><rect x="3" y="1" width="2" height="2.600"/><rect x="5.600" y="1.400" width="2.400" height="2.200" opacity=".7"/><rect x="8.600" y="1" width="2" height="2.600"/><rect x="11.200" y="1.400" width="2.400" height="2.200" opacity=".6"/><rect x="14.200" y="1" width="2.200" height="2.600"/><rect x="17" y="1.400" width="2.200" height="2.200" opacity=".7"/><rect x="19.800" y="1" width="3" height="2.600" opacity=".8"/></g><rect x="2" y="4" width="25" height="15.500" fill="#eceeee"/><rect x="5" y="4.500" width="12.500" height="14" fill="#8a9595"/><rect x="17.5" y="4.500" width="9.500" height="14" fill="#b3b7b7"/><rect x="5" y="13" width="22" height="6" fill="#c9cccc" opacity=".7"/><circle cx="4.200" cy="21.400" r=".9" fill="#4bbf5a"/><rect x="6.500" y="21" width="6" height=".8" fill="#aaa"/><rect x="14" y="21" width="7" height=".8" fill="#bbb"/></svg></div>
<div class="td op" style="left:1756px;top:682.00px">修改</div>
<div class="td op" style="left:1798px;top:682.00px">详情</div>
<svg class="abs" style="left:1840px;top:690.40px" width="18" height="5" viewBox="0 0 18 5"><g fill="#a4a4a4"><circle cx="2" cy="2.200" r="1.850"/><circle cx="8.300" cy="2.200" r="1.850"/><circle cx="14.600" cy="2.200" r="1.850"/></g></svg>
<div class="cb" style="left:213px;top:720.00px"></div>
<div class="td" style="left:247px;width:60px;text-align:center;top:721.00px">10</div>
<div class="abs" style="left:326.0px;top:719.20px"><svg width="25" height="25" viewBox="0 0 25 25" style="display:block;overflow:hidden"><g style="filter:blur(0.35px)"><rect width="25" height="25" fill="#c8a57e"/><rect x="12" y="0" width="13" height="25" fill="#ead9c6"/><rect x="0" y="0" width="4" height="25" fill="#cfae8a"/><rect x="5.500" y="0.300" width="4.700" height="7" rx="1" fill="#b9d0e2"/><rect x="6.500" y="1" width="1.500" height="5" fill="#d8e6f0"/><rect x="2.100" y="8.500" width="2.500" height="7" fill="#2c2826"/><rect x="4" y="7" width="7.200" height="8.900" fill="#1b1a1a"/><rect x="5.500" y="7.600" width="3" height=".9" fill="#7a7a7a"/><rect x="5.500" y="12" width="1.700" height="2.800" fill="#8c8c8c"/><rect x="2.600" y="10" width="1" height="4.500" fill="#777"/><rect x="4" y="15.800" width="7.200" height="8.300" fill="#ead2ca"/><rect x="4" y="24" width="7.200" height=".8" fill="#4a3a34"/><rect x="13" y="1.500" width="8" height="1.300" fill="#4a3a30"/><rect x="13" y="4" width="4" height="1" fill="#cbab92"/><rect x="18" y="4" width="4" height="1" fill="#d3b8a2"/><rect x="13" y="5.800" width="3.500" height=".9" fill="#d3b8a2"/><rect x="17.500" y="5.800" width="4" height=".9" fill="#d9c2ae"/><path d="M13 9.300 L14.500 8.300 H15.300 V10.300 H14.500 Z" fill="#0f0f0f"/><rect x="15.200" y="8.400" width="5" height="1.900" rx=".9" fill="#fafafa"/><rect x="11.800" y="13" width="3.800" height="10" fill="#b88c64"/><rect x="15.600" y="12.500" width="9.400" height="5" fill="#f0e2c8"/><path d="M17 25 L19 16 L22 16 L23.500 25 Z" fill="#f1d9cb"/><rect x="23.600" y="20" width="1.400" height="3" fill="#5c4232"/><rect x="15.600" y="17.500" width="2" height="6" fill="#cfa67e"/></g></svg></div>
<div class="td" style="left:384px;top:721.00px">饮水机</div>
<div class="td lk" style="left:505px;top:721.00px">DM90GEP75B6C</div>
<div class="td" style="left:686px;top:721.00px">美的</div>
<div class="td" style="left:807px;top:721.00px">西安雀维信...</div>
<div class="bdg" style="left:928px;top:722.40px;background:#41bb49">运行正常</div>
<div class="abs" style="left:1032px;top:calc(730.0px + -7px);width:12px;height:8px;background:#e6e6e6"></div><div class="abs" style="left:1044px;top:calc(730.0px + -7px);width:12px;height:8px;background:#dadada"></div><div class="abs" style="left:1032px;top:calc(730.0px + 1px);width:12px;height:8px;background:#fbfbfb"></div><div class="abs" style="left:1044px;top:calc(730.0px + 1px);width:12px;height:8px;background:#e2e2e2"></div>
<div class="abs" style="left:1143px;top:calc(730.0px + -6px);width:12px;height:8px;background:#f6f6f6"></div><div class="abs" style="left:1155px;top:calc(730.0px + -6px);width:12px;height:8px;background:#e8e8e8"></div><div class="abs" style="left:1167px;top:calc(730.0px + -6px);width:12px;height:8px;background:#e0e0e0"></div><div class="abs" style="left:1179px;top:calc(730.0px + -6px);width:12px;height:8px;background:#e6e6e6"></div><div class="abs" style="left:1191px;top:calc(730.0px + -6px);width:12px;height:8px;background:#e6e6e6"></div><div class="abs" style="left:1203px;top:calc(730.0px + -6px);width:12px;height:8px;background:#ececec"></div><div class="abs" style="left:1143px;top:calc(730.0px + 2px);width:12px;height:9px;background:#fafafa"></div><div class="abs" style="left:1155px;top:calc(730.0px + 2px);width:12px;height:9px;background:#f4f4f4"></div><div class="abs" style="left:1167px;top:calc(730.0px + 2px);width:12px;height:9px;background:#f0f0f0"></div><div class="abs" style="left:1179px;top:calc(730.0px + 2px);width:12px;height:9px;background:#f0f0f0"></div><div class="abs" style="left:1191px;top:calc(730.0px + 2px);width:12px;height:9px;background:#f0f0f0"></div><div class="abs" style="left:1203px;top:calc(730.0px + 2px);width:12px;height:9px;background:#f2f2f2"></div><div class="abs" style="left:1215px;top:calc(730.0px + 2px);width:12px;height:9px;background:#f8f8f8"></div>
<div class="td" style="left:1252px;top:721.00px">否</div>
<div class="td" style="left:1353px;top:721.00px">售水机</div>
<div class="td" style="left:1474px;top:721.00px">开发部</div>
<div class="td" style="left:1575px;top:721.00px;letter-spacing:.85px"></div>
<div class="abs" style="left:1686px;top:719.00px"><svg width="28" height="24" viewBox="0 0 28 24"><g fill="#555"><rect x="3" y="1" width="2" height="2.600"/><rect x="5.600" y="1.400" width="2.400" height="2.200" opacity=".7"/><rect x="8.600" y="1" width="2" height="2.600"/><rect x="11.200" y="1.400" width="2.400" height="2.200" opacity=".6"/><rect x="14.200" y="1" width="2.200" height="2.600"/><rect x="17" y="1.400" width="2.200" height="2.200" opacity=".7"/><rect x="19.800" y="1" width="3" height="2.600" opacity=".8"/></g><rect x="1" y="4" width="25" height="15.500" fill="#eceeee"/><rect x="4" y="4.500" width="12.500" height="14" fill="#8a9595"/><rect x="16.5" y="4.500" width="9.500" height="14" fill="#b3b7b7"/><path d="M0 12 L5 8 V16 Z M23 8 L28 11 L23 15 Z" fill="#d9dcdc"/><circle cx="4.200" cy="21.400" r=".9" fill="#4bbf5a"/><rect x="6.500" y="21" width="6" height=".8" fill="#aaa"/><rect x="14" y="21" width="7" height=".8" fill="#bbb"/></svg></div>
<div class="td op" style="left:1756px;top:721.00px">修改</div>
<div class="td op" style="left:1798px;top:721.00px">详情</div>
<svg class="abs" style="left:1840px;top:729.40px" width="18" height="5" viewBox="0 0 18 5"><g fill="#a4a4a4"><circle cx="2" cy="2.200" r="1.850"/><circle cx="8.300" cy="2.200" r="1.850"/><circle cx="14.600" cy="2.200" r="1.850"/></g></svg>
<div class="abs" style="left:198px;top:749.5px;width:1698px;height:21px;background:#f1f1f1"></div>
<div class="abs" style="left:219px;top:749.5px;width:1244px;height:21px;background:#cdcdcd"></div>
<svg class="abs" style="left:203px;top:754px" width="9" height="12" viewBox="0 0 9 12"><path d="M7.500 1L2 6L7.500 11" fill="none" stroke="#505050" stroke-width="2.600"/></svg>
<svg class="abs" style="left:1882px;top:754px" width="9" height="12" viewBox="0 0 9 12"><path d="M1.500 1L7 6L1.500 11" fill="none" stroke="#505050" stroke-width="2.600"/></svg>
<div class="cb" style="left:213px;top:782px"></div>
<div class="abs" style="left:241px;top:784px;height:18px;line-height:18px;font-size:12px;color:#333;white-space:nowrap">全选</div>
<div class="pg" style="left:1369px;color:#444">共 254 条</div>
<svg class="abs" style="left:1440px;top:784px" width="9" height="14" viewBox="0 0 9 14"><path d="M8 1L1.5 7L8 13" fill="none" stroke="#d2d2d2" stroke-width="1.3"/></svg>
<div class="pg" style="left:1463px;width:31px;background:#0c9789;color:#fff;text-align:center;border-radius:2px">1</div>
<div class="pg" style="left:1494px;width:30px;text-align:center">2</div>
<div class="pg" style="left:1524px;width:30px;text-align:center">3</div>
<svg class="abs" style="left:1569px;top:784px" width="9" height="14" viewBox="0 0 9 14"><path d="M1 1L7.5 7L1 13" fill="none" stroke="#333" stroke-width="1.4"/></svg>
<div class="pg" style="left:1592px;width:73px;background:#e9e9ed;border-radius:3px;color:#222;padding-left:5px">10 条/页</div>
<svg class="abs" style="left:1650px;top:788.5px" width="9" height="6" viewBox="0 0 9 6"><path d="M1 1L4.5 4.6L8 1" fill="none" stroke="#222" stroke-width="1.4"/></svg>
<div class="abs" style="left:1697px;top:781.5px"><svg width="18" height="18" viewBox="0 0 18 18"><path d="M15.400 4.800 A7.400 7.400 0 1 0 16.400 9.800" fill="none" stroke="#333" stroke-width="1.300"/><path d="M16 1.200 V5.400 H11.800" fill="none" stroke="#333" stroke-width="1.300"/></svg></div>
<div class="pg" style="left:1737px;color:#aaa">到第</div>
<div class="pg" style="left:1771px;width:40px;border:1px solid #e2e2e2;border-radius:2px;text-align:center;line-height:26px;color:#333">1</div>
<div class="pg" style="left:1820.5px;color:#aaa">页</div>
<div class="pg" style="left:1843px;width:46px;border:1px solid #e2e2e2;border-radius:2px;text-align:center;line-height:26px;color:#000">确定</div>
</body></html>
